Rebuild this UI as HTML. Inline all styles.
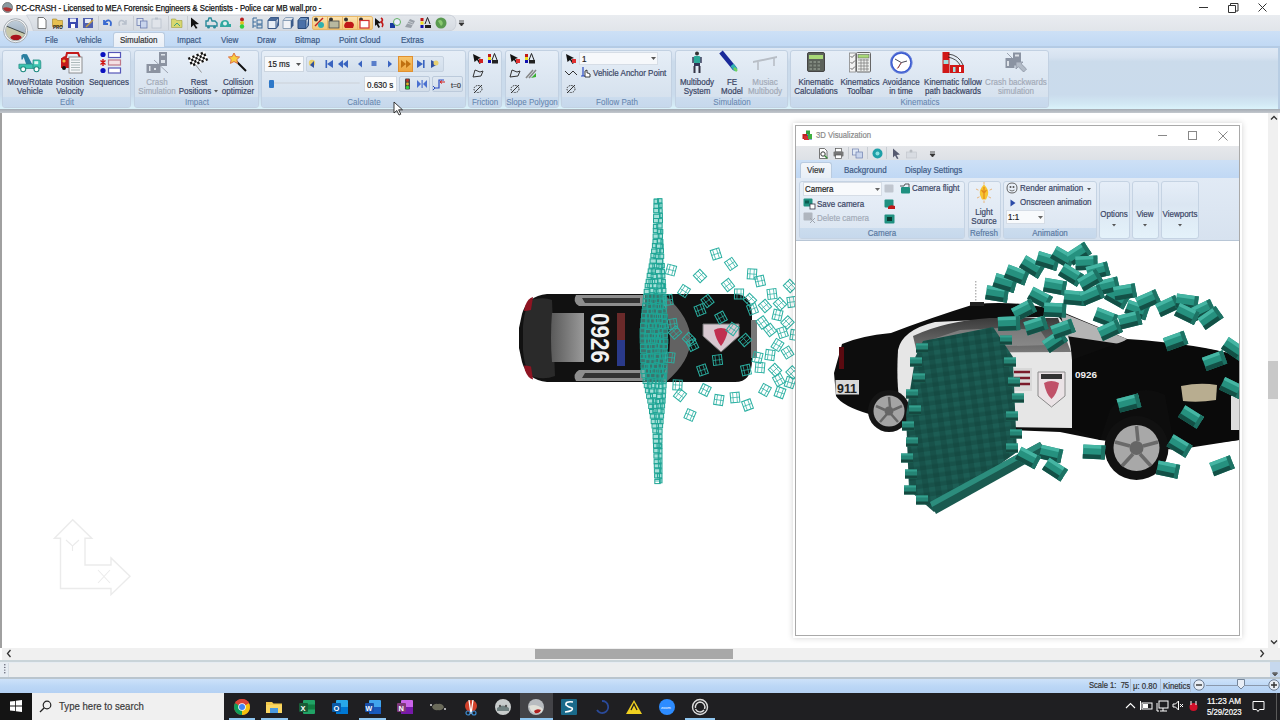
<!DOCTYPE html>
<html><head><meta charset="utf-8">
<style>
*{margin:0;padding:0;box-sizing:border-box}
html,body{width:1280px;height:720px;overflow:hidden;background:#fff;font-family:"Liberation Sans",sans-serif;position:relative}
.a{position:absolute}
.t{position:absolute;white-space:nowrap;-webkit-text-stroke-width:0.2px}
svg{overflow:visible}
</style></head><body>

<div class="a" style="left:0px;top:0px;width:1280px;height:15px;background:#fff"></div>
<svg class="a" style="left:1px;top:1px;" width="12" height="12" viewBox="0 0 12 12"><circle cx="6.5" cy="6.5" r="5" fill="#8a9aa0" stroke="#6a6a6a" stroke-width="0.8"/><path d="M2 7 Q6 5 11 8 L11 9 Q7 12 3 9Z" fill="#b03030"/></svg>
<div class="t" style="left:15.5px;top:4px;font-size:8.33px;line-height:8.33px;color:#111;transform:scaleX(0.9302);transform-origin:0 0;-webkit-text-stroke-width:0.25px">PC-CRASH - Licensed to MEA Forensic Engineers &amp; Scientists - Police car MB wall.pro -</div>
<div class="a" style="left:1199px;top:7px;width:9px;height:1px;background:#333"></div>
<svg class="a" style="left:1228px;top:2px;" width="11" height="11" viewBox="0 0 11 11"><path d="M0.5 3.5h7v7h-7z" fill="none" stroke="#333" stroke-width="1"/><path d="M2.5 3.5v-2h7.5v7.5h-2" fill="none" stroke="#333" stroke-width="1"/></svg>
<svg class="a" style="left:1258px;top:3px;" width="9" height="9" viewBox="0 0 9 9"><path d="M0.5 0.5L8.5 8.5M8.5 0.5L0.5 8.5" stroke="#333" stroke-width="1"/></svg>
<div class="a" style="left:0px;top:15px;width:1280px;height:16px;background:linear-gradient(#e9ecf0,#e1e5ea)"></div>
<svg class="a" style="left:0px;top:0px;" width="470" height="40" viewBox="0 0 470 40"><defs><linearGradient id="qg" x1="0" y1="0" x2="0" y2="1"><stop offset="0" stop-color="#e2e6eb"/><stop offset="1" stop-color="#d5dae1"/></linearGradient></defs><path d="M26.5 15 L448 15 Q456 15 456 23 Q456 31 448 31 L33.5 31 Q31 21 26.5 15Z" fill="url(#qg)" stroke="#c6ccd4" stroke-width="0.8"/></svg>
<div class="a" style="left:0px;top:31px;width:1280px;height:16px;background:linear-gradient(#cde0f6,#c0d8f4)"></div>
<div class="a" style="left:0px;top:46px;width:1280px;height:1px;background:#b5cbe4"></div>
<div class="a" style="left:113px;top:32px;width:52px;height:16px;background:linear-gradient(#f3f6fa,#e8eef6);border:1px solid #b9cbe0;border-bottom:none;border-radius:3px 3px 0 0"></div>
<div class="t" style="left:44.6px;top:36px;font-size:8.60px;line-height:8.60px;color:#3e5a85;transform:scaleX(0.9302);transform-origin:0 0;">File</div>
<div class="t" style="left:76.0px;top:36px;font-size:8.60px;line-height:8.60px;color:#3e5a85;transform:scaleX(0.9302);transform-origin:0 0;">Vehicle</div>
<div class="t" style="left:120.0px;top:36px;font-size:8.60px;line-height:8.60px;color:#333;transform:scaleX(0.9302);transform-origin:0 0;">Simulation</div>
<div class="t" style="left:177.4px;top:36px;font-size:8.60px;line-height:8.60px;color:#3e5a85;transform:scaleX(0.9302);transform-origin:0 0;">Impact</div>
<div class="t" style="left:221.0px;top:36px;font-size:8.60px;line-height:8.60px;color:#3e5a85;transform:scaleX(0.9302);transform-origin:0 0;">View</div>
<div class="t" style="left:257.0px;top:36px;font-size:8.60px;line-height:8.60px;color:#3e5a85;transform:scaleX(0.9302);transform-origin:0 0;">Draw</div>
<div class="t" style="left:294.7px;top:36px;font-size:8.60px;line-height:8.60px;color:#3e5a85;transform:scaleX(0.9302);transform-origin:0 0;">Bitmap</div>
<div class="t" style="left:339.3px;top:36px;font-size:8.60px;line-height:8.60px;color:#3e5a85;transform:scaleX(0.9302);transform-origin:0 0;">Point Cloud</div>
<div class="t" style="left:400.7px;top:36px;font-size:8.60px;line-height:8.60px;color:#3e5a85;transform:scaleX(0.9302);transform-origin:0 0;">Extras</div>
<svg class="a" style="left:3px;top:18px;" width="26" height="26" viewBox="0 0 26 26"><defs><clipPath id="oc"><circle cx="12.6" cy="12.7" r="9.6"/></clipPath><linearGradient id="sky" x1="0" y1="0" x2="0" y2="1"><stop offset="0" stop-color="#c4d2de"/><stop offset="1" stop-color="#8a9cae"/></linearGradient></defs><circle cx="12.6" cy="12.7" r="12" fill="#f2f4f6" stroke="#9aa1a8" stroke-width="0.9"/><circle cx="12.6" cy="12.7" r="10" fill="none" stroke="#8a9096" stroke-width="0.8"/><g clip-path="url(#oc)"><rect x="0" y="0" width="26" height="26" fill="url(#sky)"/><path d="M0 7 L26 17 L26 26 L0 26Z" fill="#c9c9aa"/><path d="M2 7.5 L24 16.5" stroke="#3e4646" stroke-width="1"/><ellipse cx="13" cy="19.5" rx="5.5" ry="2.8" fill="#a8141c"/><path d="M5 20 Q9 23 12 23" stroke="#e8d8d0" stroke-width="1" fill="none"/></g></svg>
<svg class="a" style="left:35.7px;top:17.0px;" width="12" height="12" viewBox="0 0 12 12"><path d="M2 0.5h5.5l2.5 2.5v8.5h-8z" fill="#fff" stroke="#555" stroke-width="0.8"/></svg>
<svg class="a" style="left:51.5px;top:17.0px;" width="12" height="12" viewBox="0 0 12 12"><path d="M0.5 2h4l1 1.5h5v6h-10z" fill="#e8c050" stroke="#a08020" stroke-width="0.6"/><text x="1" y="11.5" font-size="4.5" font-weight="bold" fill="#111" font-family="Liberation Sans">PRO</text></svg>
<svg class="a" style="left:66.6px;top:17.0px;" width="12" height="12" viewBox="0 0 12 12"><rect x="1" y="1" width="10" height="10" fill="#3a4ab0"/><rect x="3" y="1.5" width="6" height="3.5" fill="#e8ecf8"/><rect x="4" y="7" width="4" height="4" fill="#fff"/></svg>
<svg class="a" style="left:82.0px;top:17.0px;" width="12" height="12" viewBox="0 0 12 12"><rect x="1" y="1" width="10" height="10" fill="#5060b0"/><rect x="3" y="2" width="6" height="4" fill="#e8ecf8"/><path d="M4 10l7-7" stroke="#c8a040" stroke-width="1.5"/></svg>
<div class="a" style="left:97.5px;top:16px;width:1px;height:14px;background:#c7ccd3"></div>
<svg class="a" style="left:101.3px;top:17.0px;" width="12" height="12" viewBox="0 0 12 12"><path d="M3 3v4h4M3.5 7 Q5 3 8 3.5 Q11 4.5 9.5 9" fill="none" stroke="#3a6ad0" stroke-width="1.8"/></svg>
<svg class="a" style="left:116.8px;top:17.0px;" width="12" height="12" viewBox="0 0 12 12"><path d="M9 3v4h-4M8.5 7 Q7 3 4 3.5 Q1 4.5 2.5 9" fill="none" stroke="#b8c0cc" stroke-width="1.5"/></svg>
<div class="a" style="left:133px;top:16px;width:1px;height:14px;background:#c7ccd3"></div>
<svg class="a" style="left:135.7px;top:17.0px;" width="12" height="12" viewBox="0 0 12 12"><rect x="1" y="1.5" width="6" height="7" fill="#dfe6f0" stroke="#6a7ab0" stroke-width="0.8"/><rect x="4.5" y="4" width="6.5" height="7" fill="#c8d4ec" stroke="#6a7ab0" stroke-width="0.8"/></svg>
<svg class="a" style="left:151.1px;top:17.0px;" width="12" height="12" viewBox="0 0 12 12"><rect x="1" y="2" width="9" height="9" fill="#e0e4ea" stroke="#b8c0cc" stroke-width="0.8"/><rect x="4" y="0.5" width="3" height="2" fill="#b8c0cc"/></svg>
<div class="a" style="left:167.5px;top:16px;width:1px;height:14px;background:#c7ccd3"></div>
<svg class="a" style="left:170.9px;top:17.0px;" width="12" height="12" viewBox="0 0 12 12"><path d="M0.5 2h4l1 1.5h5.5v7h-10.5z" fill="#d8d870" stroke="#a0a040" stroke-width="0.6"/><path d="M3 9l3-3 3 3" stroke="#40a080" fill="none"/></svg>
<div class="a" style="left:187.2px;top:16px;width:1px;height:14px;background:#c7ccd3"></div>
<svg class="a" style="left:189.0px;top:17.0px;" width="12" height="12" viewBox="0 0 12 12"><path d="M2 0.5 L10 7 L6 7.5 L8.5 11 L6.8 11.8 L4.5 8 L2 10.5Z" fill="#111"/></svg>
<svg class="a" style="left:204.8px;top:17.0px;" width="13" height="12" viewBox="0 0 13 12"><path d="M1 9h11v-3l-2-2h-3l-1-3h-2l-1 3h-2z" fill="none" stroke="#2a8a9a" stroke-width="1.4"/><circle cx="3.5" cy="10" r="1.5" fill="#2a8a9a"/><circle cx="9.5" cy="10" r="1.5" fill="#2a8a9a"/></svg>
<svg class="a" style="left:219.4px;top:17.0px;" width="13" height="12" viewBox="0 0 13 12"><path d="M1 10 Q1 3 6 3 Q10 3 10 7 h2 v3z" fill="#30a8a0"/><circle cx="6" cy="6.5" r="2" fill="#e0f0f0"/></svg>
<svg class="a" style="left:235.7px;top:17.0px;" width="12" height="12" viewBox="0 0 12 12"><circle cx="6" cy="2.5" r="2" fill="#b82020"/><circle cx="6" cy="6" r="2" fill="#e0c020"/><circle cx="6" cy="9.5" r="2.2" fill="#30d040"/></svg>
<svg class="a" style="left:251.3px;top:17.0px;" width="12" height="12" viewBox="0 0 12 12"><path d="M2 1h4M2 1v10M2 5h3M2 9h3" stroke="#3a6a9a" stroke-width="1" fill="none"/><rect x="6" y="3" width="5" height="4" fill="none" stroke="#3a6a9a"/><rect x="6" y="8" width="5" height="3" fill="none" stroke="#3a6a9a"/></svg>
<svg class="a" style="left:266.6px;top:17.0px;" width="12" height="12" viewBox="0 0 12 12"><path d="M1 3.5h8v8h-8z" fill="#e8eef6" stroke="#3a5a8a"/><path d="M1 3.5l2.5-3h8l-2.5 3M9 11.5l2.5-3v-8" fill="#4a6a9a" stroke="#3a5a8a"/></svg>
<svg class="a" style="left:281.7px;top:17.0px;" width="12" height="12" viewBox="0 0 12 12"><path d="M1 3.5h8v8h-8z" fill="#f0f2f6" stroke="#8aa0b8"/><path d="M9 11.5l2.5-3v-8l-2.5 3z" fill="#3a5a8a"/><path d="M1 3.5l2.5-3h8" fill="none" stroke="#8aa0b8"/></svg>
<svg class="a" style="left:297.0px;top:17.0px;" width="12" height="12" viewBox="0 0 12 12"><path d="M1 3.5h8v8h-8z" fill="#4a70a8" stroke="#2a4a7a"/><path d="M1 3.5l2.5-3h8l-2.5 3M9 11.5l2.5-3v-8" fill="#6a90c0" stroke="#2a4a7a"/></svg>
<div class="a" style="left:311.5px;top:16px;width:61px;height:14px;background:linear-gradient(#fbe3b0,#f4c878);border:1px solid #e8b868;border-radius:2px"></div>
<div class="a" style="left:326.6px;top:16px;width:1px;height:14px;background:#e8b868"></div>
<div class="a" style="left:341.7px;top:16px;width:1px;height:14px;background:#e8b868"></div>
<div class="a" style="left:356.8px;top:16px;width:1px;height:14px;background:#e8b868"></div>
<svg class="a" style="left:312.7px;top:17.0px;" width="12" height="12" viewBox="0 0 12 12"><circle cx="3" cy="2.5" r="2" fill="#333"/><path d="M2 9l8-8" stroke="#c02020" stroke-width="1.5"/><circle cx="8" cy="8" r="3" fill="#30b0b0"/></svg>
<svg class="a" style="left:327.8px;top:17.0px;" width="12" height="12" viewBox="0 0 12 12"><circle cx="3" cy="2.5" r="2" fill="#333"/><rect x="1" y="4" width="10" height="7" fill="#b8b8a0" stroke="#444" stroke-width="0.8"/></svg>
<svg class="a" style="left:342.9px;top:17.0px;" width="12" height="12" viewBox="0 0 12 12"><circle cx="3" cy="2.5" r="2" fill="#333"/><path d="M1 9 Q2 4 6 5 Q10 4 11 8 L10 11 H2Z" fill="#c01818"/></svg>
<svg class="a" style="left:358.0px;top:17.0px;" width="12" height="12" viewBox="0 0 12 12"><circle cx="3" cy="2.5" r="2" fill="#333"/><rect x="2" y="3.5" width="9" height="7.5" fill="#fff" stroke="#d03030" stroke-width="1.2"/></svg>
<svg class="a" style="left:374.3px;top:17.0px;" width="12" height="12" viewBox="0 0 12 12"><path d="M1 1 L7 6 L4 6.5 L6 10 L4.5 11 L2.5 7.5 L1 9Z" fill="#111"/><path d="M7 1 Q10 3 7 5 Q10 7 8 10" stroke="#c01818" stroke-width="1.6" fill="none"/></svg>
<svg class="a" style="left:389.3px;top:17.0px;" width="12" height="12" viewBox="0 0 12 12"><path d="M1 6h5v5h-5z" fill="#1a3aa0"/><circle cx="8" cy="5" r="3.5" fill="#eef" stroke="#60b060" stroke-width="1"/></svg>
<svg class="a" style="left:404.2px;top:17.0px;" width="12" height="12" viewBox="0 0 12 12"><path d="M1 10 L6 2 L11 4 L7 11Z" fill="#9aa0a8"/><path d="M3 6l6 2M4 4l5 2" stroke="#d0d4da" stroke-width="0.8"/></svg>
<svg class="a" style="left:420.0px;top:17.0px;" width="12" height="12" viewBox="0 0 12 12"><rect x="0.5" y="1" width="3" height="3" fill="#c01818"/><rect x="0.5" y="4.5" width="3" height="3" fill="#f0e020"/><rect x="0.5" y="8" width="3" height="3" fill="#1010b0"/><path d="M5 7 L7.5 0.5 L10 7" fill="none" stroke="#222"/><rect x="5" y="8" width="6" height="3" fill="#222"/></svg>
<svg class="a" style="left:435.0px;top:17.0px;" width="12" height="12" viewBox="0 0 12 12"><circle cx="6" cy="6" r="5.5" fill="#5a9a50"/><path d="M3 4 Q5 2 7 4 Q9 7 6 9" fill="#8ac870"/></svg>
<svg class="a" style="left:456.0px;top:17.0px;" width="11" height="12" viewBox="0 0 11 12"><path d="M3 4h5M3 6l2.5 3 2.5-3z" stroke="#333" fill="#333" stroke-width="0.8"/></svg>
<div class="a" style="left:0px;top:47px;width:1280px;height:63px;background:linear-gradient(#dfe9f5 0%,#d6e2f0 15%,#cbdbeb 22%,#cadbec 75%,#d2e8f4 90%,#dcf5fc 100%);border-top:1px solid #b3cbe6;border-right:2px solid #b8cde3"></div>
<div class="a" style="left:0px;top:109px;width:1280px;height:4px;background:linear-gradient(#a4abb3,#c3c8ce)"></div>
<div class="a" style="left:2px;top:50px;width:129px;height:58px;border:1px solid #c2d1e2;border-radius:3px;background:linear-gradient(#e6eef7,#dde7f2 45%,#d3dfec)"></div>
<div class="a" style="left:3px;top:97px;width:127px;height:10px;background:linear-gradient(#cbdcee,#c6d8ec);border-radius:0 0 2px 2px"></div>
<div class="t" style="left:-33.5px;width:200px;text-align:center;top:98px;font-size:8.60px;line-height:8.60px;color:#6585ae;transform:scaleX(0.9302);transform-origin:50% 0;-webkit-text-stroke-width:0.05px">Edit</div>
<div class="a" style="left:134px;top:50px;width:125px;height:58px;border:1px solid #c2d1e2;border-radius:3px;background:linear-gradient(#e6eef7,#dde7f2 45%,#d3dfec)"></div>
<div class="a" style="left:135px;top:97px;width:123px;height:10px;background:linear-gradient(#cbdcee,#c6d8ec);border-radius:0 0 2px 2px"></div>
<div class="t" style="left:96.5px;width:200px;text-align:center;top:98px;font-size:8.60px;line-height:8.60px;color:#6585ae;transform:scaleX(0.9302);transform-origin:50% 0;-webkit-text-stroke-width:0.05px">Impact</div>
<div class="a" style="left:261px;top:50px;width:205px;height:58px;border:1px solid #c2d1e2;border-radius:3px;background:linear-gradient(#e6eef7,#dde7f2 45%,#d3dfec)"></div>
<div class="a" style="left:262px;top:97px;width:203px;height:10px;background:linear-gradient(#cbdcee,#c6d8ec);border-radius:0 0 2px 2px"></div>
<div class="t" style="left:263.5px;width:200px;text-align:center;top:98px;font-size:8.60px;line-height:8.60px;color:#6585ae;transform:scaleX(0.9302);transform-origin:50% 0;-webkit-text-stroke-width:0.05px">Calculate</div>
<div class="a" style="left:468px;top:50px;width:34px;height:58px;border:1px solid #c2d1e2;border-radius:3px;background:linear-gradient(#e6eef7,#dde7f2 45%,#d3dfec)"></div>
<div class="a" style="left:469px;top:97px;width:32px;height:10px;background:linear-gradient(#cbdcee,#c6d8ec);border-radius:0 0 2px 2px"></div>
<div class="t" style="left:385.0px;width:200px;text-align:center;top:98px;font-size:8.60px;line-height:8.60px;color:#6585ae;transform:scaleX(0.9302);transform-origin:50% 0;-webkit-text-stroke-width:0.05px">Friction</div>
<div class="a" style="left:505px;top:50px;width:54px;height:58px;border:1px solid #c2d1e2;border-radius:3px;background:linear-gradient(#e6eef7,#dde7f2 45%,#d3dfec)"></div>
<div class="a" style="left:506px;top:97px;width:52px;height:10px;background:linear-gradient(#cbdcee,#c6d8ec);border-radius:0 0 2px 2px"></div>
<div class="t" style="left:432.0px;width:200px;text-align:center;top:98px;font-size:8.60px;line-height:8.60px;color:#6585ae;transform:scaleX(0.9302);transform-origin:50% 0;-webkit-text-stroke-width:0.05px">Slope Polygon</div>
<div class="a" style="left:561px;top:50px;width:111px;height:58px;border:1px solid #c2d1e2;border-radius:3px;background:linear-gradient(#e6eef7,#dde7f2 45%,#d3dfec)"></div>
<div class="a" style="left:562px;top:97px;width:109px;height:10px;background:linear-gradient(#cbdcee,#c6d8ec);border-radius:0 0 2px 2px"></div>
<div class="t" style="left:516.5px;width:200px;text-align:center;top:98px;font-size:8.60px;line-height:8.60px;color:#6585ae;transform:scaleX(0.9302);transform-origin:50% 0;-webkit-text-stroke-width:0.05px">Follow Path</div>
<div class="a" style="left:675px;top:50px;width:113px;height:58px;border:1px solid #c2d1e2;border-radius:3px;background:linear-gradient(#e6eef7,#dde7f2 45%,#d3dfec)"></div>
<div class="a" style="left:676px;top:97px;width:111px;height:10px;background:linear-gradient(#cbdcee,#c6d8ec);border-radius:0 0 2px 2px"></div>
<div class="t" style="left:631.5px;width:200px;text-align:center;top:98px;font-size:8.60px;line-height:8.60px;color:#6585ae;transform:scaleX(0.9302);transform-origin:50% 0;-webkit-text-stroke-width:0.05px">Simulation</div>
<div class="a" style="left:790px;top:50px;width:259px;height:58px;border:1px solid #c2d1e2;border-radius:3px;background:linear-gradient(#e6eef7,#dde7f2 45%,#d3dfec)"></div>
<div class="a" style="left:791px;top:97px;width:257px;height:10px;background:linear-gradient(#cbdcee,#c6d8ec);border-radius:0 0 2px 2px"></div>
<div class="t" style="left:819.5px;width:200px;text-align:center;top:98px;font-size:8.60px;line-height:8.60px;color:#6585ae;transform:scaleX(0.9302);transform-origin:50% 0;-webkit-text-stroke-width:0.05px">Kinematics</div>
<div class="t" style="left:-70.0px;width:200px;text-align:center;top:78px;font-size:8.60px;line-height:8.60px;color:#3a4565;transform:scaleX(0.9302);transform-origin:50% 0;">Move/Rotate</div>
<div class="t" style="left:-70.0px;width:200px;text-align:center;top:87px;font-size:8.60px;line-height:8.60px;color:#3a4565;transform:scaleX(0.9302);transform-origin:50% 0;">Vehicle</div>
<div class="t" style="left:-30.0px;width:200px;text-align:center;top:78px;font-size:8.60px;line-height:8.60px;color:#3a4565;transform:scaleX(0.9302);transform-origin:50% 0;">Position</div>
<div class="t" style="left:-30.0px;width:200px;text-align:center;top:87px;font-size:8.60px;line-height:8.60px;color:#3a4565;transform:scaleX(0.9302);transform-origin:50% 0;">Velocity</div>
<div class="t" style="left:8.5px;width:200px;text-align:center;top:78px;font-size:8.60px;line-height:8.60px;color:#3a4565;transform:scaleX(0.9302);transform-origin:50% 0;">Sequences</div>
<svg class="a" style="left:18px;top:52px;" width="24" height="21" viewBox="0 0 24 21"><path d="M3.4 3.2 L5.2 1.9 L9 2.3 L14.2 12.2 L8.2 12.2 L5.6 4.9 L4.7 7.5 L3.4 7.5Z" fill="#2a7fa0"/><path d="M0.9 12.2 H16.3 V16.5 H0.9Z" fill="#3cc4b0" stroke="#1f8a80" stroke-width="0.7"/><path d="M15 7.9 H21 Q22.8 7.9 22.8 10 V16.5 H15Z" fill="#3cc4b0" stroke="#1f8a80" stroke-width="0.7"/><rect x="16.3" y="9.2" width="3.9" height="3" fill="#dff7f2"/><circle cx="5.2" cy="17.3" r="2.5" fill="#fff" stroke="#1f8a80" stroke-width="1.1"/><circle cx="18.5" cy="17.3" r="2.5" fill="#fff" stroke="#1f8a80" stroke-width="1.1"/></svg>
<svg class="a" style="left:60px;top:52px;" width="23" height="22" viewBox="0 0 23 22"><path d="M2 15 L2 8 Q3 5 6 5 L7 1 L18 1 L20 6 L20 9 L10 9 L10 15Z" fill="none" stroke="#c41a1a" stroke-width="2"/><rect x="1" y="6" width="8" height="9" fill="#c41a1a"/><circle cx="4" cy="9" r="1.6" fill="#f5b840"/><circle cx="4" cy="16" r="2" fill="#111"/><rect x="9" y="5" width="13" height="16" fill="#f4f6f8" stroke="#777" stroke-width="0.8"/><path d="M11 8h9M11 10.5h9M11 13h9M11 15.5h9M11 18h9" stroke="#9aa" stroke-width="0.8"/></svg>
<svg class="a" style="left:99px;top:51px;" width="23" height="24" viewBox="0 0 23 24"><circle cx="4" cy="3.5" r="2.6" fill="#0a10c0"/><circle cx="4" cy="19.5" r="2.6" fill="#0a10c0"/><path d="M4 8v7M1.5 9.5l5 4M6.5 9.5l-5 4" stroke="#d01010" stroke-width="1.4"/><rect x="9.5" y="1.5" width="12" height="5" fill="#fff" stroke="#5656b8" stroke-width="1.2"/><rect x="9.5" y="9" width="12" height="5" fill="#f4e0e4" stroke="#c07888" stroke-width="1.2"/><rect x="9.5" y="17" width="12" height="5" fill="#fff" stroke="#5656b8" stroke-width="1.2"/></svg>
<div class="t" style="left:57.4px;width:200px;text-align:center;top:78px;font-size:8.60px;line-height:8.60px;color:#a3abb8;transform:scaleX(0.9302);transform-origin:50% 0;">Crash</div>
<div class="t" style="left:57.4px;width:200px;text-align:center;top:87px;font-size:8.60px;line-height:8.60px;color:#a3abb8;transform:scaleX(0.9302);transform-origin:50% 0;">Simulation</div>
<div class="t" style="left:98.9px;width:200px;text-align:center;top:78px;font-size:8.60px;line-height:8.60px;color:#3a4565;transform:scaleX(0.9302);transform-origin:50% 0;">Rest</div>
<div class="t" style="left:95.4px;width:200px;text-align:center;top:87px;font-size:8.60px;line-height:8.60px;color:#3a4565;transform:scaleX(0.9302);transform-origin:50% 0;">Positions</div>
<svg class="a" style="left:214px;top:90px;" width="4" height="2.5" viewBox="0 0 4 2.5"><path d="M0 0h4L2 2.5Z" fill="#555"/></svg>
<div class="t" style="left:138.0px;width:200px;text-align:center;top:78px;font-size:8.60px;line-height:8.60px;color:#3a4565;transform:scaleX(0.9302);transform-origin:50% 0;">Collision</div>
<div class="t" style="left:138.0px;width:200px;text-align:center;top:87px;font-size:8.60px;line-height:8.60px;color:#3a4565;transform:scaleX(0.9302);transform-origin:50% 0;">optimizer</div>
<svg class="a" style="left:146px;top:52px;" width="23" height="22" viewBox="0 0 23 22"><rect x="0.5" y="12" width="14" height="9" fill="#8b93a1"/><rect x="13" y="0" width="8" height="14" fill="#8b93a1"/><rect x="3" y="14" width="1.5" height="5" fill="#dde3ea"/><rect x="8" y="16" width="2" height="2" fill="#dde3ea"/><rect x="15" y="2" width="4" height="1.5" fill="#dde3ea"/><rect x="15" y="8" width="4" height="3" fill="#dde3ea"/><path d="M8 8 L22 21" stroke="#8b93a1" stroke-width="0.8"/></svg>
<svg class="a" style="left:188px;top:51px;" width="22" height="23" viewBox="0 0 22 23"><path d="M7 13 L13.5 21.5" stroke="#8a8a8a" stroke-width="0.9"/><g transform="rotate(-22 10 8)"><rect x="1" y="3" width="18" height="10" fill="#fff"/><g fill="#111"><rect x="1" y="3" width="2.25" height="2.5"/><rect x="5.5" y="3" width="2.25" height="2.5"/><rect x="10" y="3" width="2.25" height="2.5"/><rect x="14.5" y="3" width="2.25" height="2.5"/><rect x="3.25" y="5.5" width="2.25" height="2.5"/><rect x="7.75" y="5.5" width="2.25" height="2.5"/><rect x="12.25" y="5.5" width="2.25" height="2.5"/><rect x="16.75" y="5.5" width="2.25" height="2.5"/><rect x="1" y="8" width="2.25" height="2.5"/><rect x="5.5" y="8" width="2.25" height="2.5"/><rect x="10" y="8" width="2.25" height="2.5"/><rect x="14.5" y="8" width="2.25" height="2.5"/><rect x="3.25" y="10.5" width="2.25" height="2.5"/><rect x="7.75" y="10.5" width="2.25" height="2.5"/><rect x="12.25" y="10.5" width="2.25" height="2.5"/><rect x="16.75" y="10.5" width="2.25" height="2.5"/></g></g></svg>
<svg class="a" style="left:227px;top:52px;" width="22" height="22" viewBox="0 0 22 22"><path d="M9 9 L19 19" stroke="#111" stroke-width="2"/><path d="M7 1 L8.8 4.6 L12.6 5 L9.8 7.6 L10.6 11.4 L7 9.5 L3.4 11.4 L4.2 7.6 L1.4 5 L5.2 4.6Z" fill="#f6d040" stroke="#e07040" stroke-width="1"/></svg>
<div class="a" style="left:264px;top:56px;width:40px;height:16px;background:#f7f9fb;border:1px solid #cdd6e0"></div>
<div class="t" style="left:267.5px;top:60px;font-size:8.60px;line-height:8.60px;color:#222;transform:scaleX(0.9302);transform-origin:0 0;">15 ms</div>
<svg class="a" style="left:296px;top:63px;" width="5" height="3" viewBox="0 0 5 3"><path d="M0 0h5L2.5 3Z" fill="#555"/></svg>
<div class="a" style="left:306px;top:56px;width:138px;height:16px;background:linear-gradient(#dde7f2,#d2deeb);border:1px solid #c6d2e0;border-radius:2px"></div>
<div class="a" style="left:398px;top:56px;width:15px;height:16px;background:linear-gradient(#f7c46a,#eea640);border:1px solid #e09030"></div>
<svg class="a" style="left:306px;top:56px;" width="138" height="16" viewBox="0 0 138 16"><circle cx="6" cy="7" r="3.2" fill="#e8d070"/><path d="M4 9 L8 5 L8 12Z" fill="#3050a0"/><rect x="19.5" y="4" width="1.6" height="8" fill="#3a64c0"/><path d="M27 4v8l-6-4Z" fill="#3a64c0"/><path d="M37 4v8l-5-4ZM42 4v8l-5-4Z" fill="#3a64c0"/><path d="M56 4.5v7l-4-3.5Z" fill="#3a64c0"/><rect x="65.5" y="5" width="5" height="5" fill="#3a64c0" opacity=".8"/><path d="M82 4.5v7l4-3.5Z" fill="#3a64c0"/><path d="M95 4v8l5-4ZM100 4v8l5-4Z" fill="#c07010"/><path d="M111 4v8l6-4Z" fill="#3a64c0"/><rect x="117" y="4" width="1.6" height="8" fill="#3a64c0"/><path d="M125 4v8l7-4Z" fill="#3050a0"/><circle cx="130" cy="7" r="2.5" fill="#e8d070"/></svg>
<div class="a" style="left:268px;top:82px;width:92px;height:2px;background:#d3dbe4;border-radius:1px"></div>
<div class="a" style="left:269px;top:80px;width:5px;height:8px;background:#2e78c8;border-radius:1px"></div>
<div class="a" style="left:364px;top:76px;width:33px;height:16px;background:#fbfcfd;border:1px solid #d0d8e2"></div>
<div class="t" style="left:366.5px;top:81px;font-size:8.60px;line-height:8.60px;color:#222;transform:scaleX(0.9302);transform-origin:0 0;">0.630 s</div>
<div class="a" style="left:399px;top:76px;width:31px;height:16px;background:linear-gradient(#dfe8f2,#d2dde9);border:1px solid #bccadb;border-radius:2px"></div>
<svg class="a" style="left:403px;top:77px;" width="26" height="14" viewBox="0 0 26 14"><rect x="2" y="1.5" width="5" height="11" rx="1" fill="#444"/><circle cx="4.5" cy="3.5" r="1.4" fill="#c03020"/><circle cx="4.5" cy="7" r="1.4" fill="#e0b020"/><circle cx="4.5" cy="10.5" r="1.8" fill="#30d040"/><path d="M14 3v8l4-4ZM24 3v8l-4-4Z" fill="#4a70d0"/><rect x="18.5" y="3" width="1.2" height="8" fill="#4a70d0"/></svg>
<div class="a" style="left:432px;top:76px;width:31px;height:16px;background:linear-gradient(#dfe8f2,#d2dde9);border:1px solid #bccadb;border-radius:2px"></div>
<svg class="a" style="left:433px;top:77px;" width="14" height="14" viewBox="0 0 14 14"><path d="M1 11h5V3h5" fill="none" stroke="#2a4ac0" stroke-width="1.2"/><path d="M7 5h5M9 3.5l-2 1.5 2 1.5" stroke="#d02020" stroke-width="1" fill="none"/><path d="M0 9l2 2-2 2" stroke="#2a4ac0" fill="none" stroke-width="1"/></svg>
<div class="t" style="left:450.5px;top:82px;font-size:7.52px;line-height:7.52px;color:#333;transform:scaleX(0.9302);transform-origin:0 0;">t=0</div>
<svg class="a" style="left:472px;top:53px;" width="12" height="11" viewBox="0 0 12 11"><path d="M1 1 L9 5 L6 6 L9 10 L7.5 11 L5 7 L2.5 9Z" fill="#111"/><rect x="7" y="6" width="4" height="4" fill="#d02020"/></svg>
<svg class="a" style="left:488px;top:53px;" width="11" height="11" viewBox="0 0 11 11"><rect x="0" y="1" width="3" height="3" fill="#c01818"/><rect x="0" y="4" width="3" height="3" fill="#f0e020"/><rect x="0" y="7" width="3" height="3" fill="#1010b0"/><path d="M4 7 L6.5 0.5 L9 7" fill="none" stroke="#222" stroke-width="1"/><rect x="4" y="7" width="6" height="3.5" fill="#222"/></svg>
<svg class="a" style="left:472px;top:69px;" width="12" height="9" viewBox="0 0 12 9"><path d="M1 8 L3 1 L8 3 L11 2 L9 7Z" fill="none" stroke="#333" stroke-width="1"/></svg>
<svg class="a" style="left:472px;top:83px;" width="12" height="11" viewBox="0 0 12 11"><ellipse cx="6" cy="6" rx="4" ry="3.5" fill="none" stroke="#333" stroke-width="1" stroke-dasharray="1.5 1"/><path d="M2 10 L10 2" stroke="#333" stroke-width="1"/></svg>
<svg class="a" style="left:509px;top:53px;" width="12" height="11" viewBox="0 0 12 11"><path d="M1 1 L9 5 L6 6 L9 10 L7.5 11 L5 7 L2.5 9Z" fill="#111"/><rect x="7" y="6" width="4" height="4" fill="#e03030"/></svg>
<svg class="a" style="left:525px;top:53px;" width="11" height="11" viewBox="0 0 11 11"><rect x="0" y="1" width="3" height="3" fill="#c01818"/><rect x="0" y="4" width="3" height="3" fill="#f0e020"/><rect x="0" y="7" width="3" height="3" fill="#1010b0"/><path d="M4 7 L6.5 0.5 L9 7" fill="none" stroke="#222" stroke-width="1"/><rect x="4" y="7" width="6" height="3.5" fill="#222"/></svg>
<svg class="a" style="left:509px;top:69px;" width="12" height="9" viewBox="0 0 12 9"><path d="M1 8 L3 1 L8 3 L11 2 L9 7Z" fill="none" stroke="#333" stroke-width="1"/></svg>
<svg class="a" style="left:525px;top:68px;" width="12" height="11" viewBox="0 0 12 11"><path d="M1 10 L8 2 M4 10 L11 2" stroke="#888" stroke-width="1.6"/><path d="M6 10 L11 5 L11 9Z" fill="#3ab030"/></svg>
<svg class="a" style="left:509px;top:83px;" width="12" height="11" viewBox="0 0 12 11"><ellipse cx="6" cy="6" rx="4" ry="3.5" fill="none" stroke="#333" stroke-width="1" stroke-dasharray="1.5 1"/><path d="M2 10 L10 2" stroke="#333" stroke-width="1"/></svg>
<svg class="a" style="left:565px;top:53px;" width="12" height="11" viewBox="0 0 12 11"><path d="M1 1 L9 5 L6 6 L9 10 L7.5 11 L5 7 L2.5 9Z" fill="#111"/><rect x="7" y="6" width="4" height="4" fill="#e03030"/></svg>
<div class="a" style="left:579px;top:52px;width:79px;height:13px;background:#f6f8fb;border:1px solid #d6dde6"></div>
<div class="t" style="left:581.5px;top:55px;font-size:8.60px;line-height:8.60px;color:#222;transform:scaleX(0.9302);transform-origin:0 0;">1</div>
<svg class="a" style="left:651px;top:57px;" width="5" height="3" viewBox="0 0 5 3"><path d="M0 0h5L2.5 3Z" fill="#555"/></svg>
<svg class="a" style="left:565px;top:69px;" width="12" height="8" viewBox="0 0 12 8"><path d="M0 2 L4 6 L8 2 L12 6" fill="none" stroke="#333" stroke-width="1"/></svg>
<svg class="a" style="left:580px;top:66px;" width="12" height="12" viewBox="0 0 12 12"><path d="M3 1v9M1 10h4" stroke="#2a4ac0" stroke-width="1.2"/><path d="M5 5v6h5v-3l-2-1-1 0v-3Z" fill="#fff" stroke="#111" stroke-width="0.8"/></svg>
<div class="t" style="left:593.0px;top:69px;font-size:8.60px;line-height:8.60px;color:#3a4565;transform:scaleX(0.9302);transform-origin:0 0;">Vehicle Anchor Point</div>
<svg class="a" style="left:565px;top:83px;" width="12" height="11" viewBox="0 0 12 11"><ellipse cx="6" cy="6" rx="4" ry="3.5" fill="none" stroke="#333" stroke-width="1" stroke-dasharray="1.5 1"/><path d="M2 10 L10 2" stroke="#333" stroke-width="1"/></svg>
<div class="t" style="left:597.0px;width:200px;text-align:center;top:78px;font-size:8.60px;line-height:8.60px;color:#3a4565;transform:scaleX(0.9302);transform-origin:50% 0;">Multibody</div>
<div class="t" style="left:597.0px;width:200px;text-align:center;top:87px;font-size:8.60px;line-height:8.60px;color:#3a4565;transform:scaleX(0.9302);transform-origin:50% 0;">System</div>
<div class="t" style="left:631.5px;width:200px;text-align:center;top:78px;font-size:8.60px;line-height:8.60px;color:#3a4565;transform:scaleX(0.9302);transform-origin:50% 0;">FE</div>
<div class="t" style="left:631.5px;width:200px;text-align:center;top:87px;font-size:8.60px;line-height:8.60px;color:#3a4565;transform:scaleX(0.9302);transform-origin:50% 0;">Model</div>
<div class="t" style="left:665.0px;width:200px;text-align:center;top:78px;font-size:8.60px;line-height:8.60px;color:#a3abb8;transform:scaleX(0.9302);transform-origin:50% 0;">Musiac</div>
<div class="t" style="left:665.0px;width:200px;text-align:center;top:87px;font-size:8.60px;line-height:8.60px;color:#a3abb8;transform:scaleX(0.9302);transform-origin:50% 0;">Multibody</div>
<svg class="a" style="left:690px;top:51px;" width="14" height="23" viewBox="0 0 14 23"><circle cx="7" cy="2.5" r="2" fill="#333"/><rect x="3.5" y="5" width="7" height="7" rx="1.5" fill="#2aa898"/><rect x="4" y="12" width="6" height="3" fill="#335"/><path d="M4.5 15v7M9.5 15v7" stroke="#334" stroke-width="2"/><path d="M3 6v6M11 6v6" stroke="#335" stroke-width="1.4"/></svg>
<svg class="a" style="left:719px;top:51px;" width="20" height="22" viewBox="0 0 20 22"><path d="M2 1 L16 18" stroke="#1a2a9a" stroke-width="4.5"/><path d="M13 14 L17 19" stroke="#30b0b0" stroke-width="4"/><path d="M15 17 L18 20" stroke="#70d060" stroke-width="2.5"/></svg>
<svg class="a" style="left:752px;top:54px;" width="26" height="17" viewBox="0 0 26 17"><path d="M1 7 L25 2 L25 4 L1 9Z" fill="#b8bec6"/><path d="M6 8v8M22 4v8" stroke="#b8bec6" stroke-width="1.6"/></svg>
<div class="t" style="left:715.5px;width:200px;text-align:center;top:78px;font-size:8.60px;line-height:8.60px;color:#3a4565;transform:scaleX(0.9302);transform-origin:50% 0;">Kinematic</div>
<div class="t" style="left:715.5px;width:200px;text-align:center;top:87px;font-size:8.60px;line-height:8.60px;color:#3a4565;transform:scaleX(0.9302);transform-origin:50% 0;">Calculations</div>
<div class="t" style="left:760.0px;width:200px;text-align:center;top:78px;font-size:8.60px;line-height:8.60px;color:#3a4565;transform:scaleX(0.9302);transform-origin:50% 0;">Kinematics</div>
<div class="t" style="left:760.0px;width:200px;text-align:center;top:87px;font-size:8.60px;line-height:8.60px;color:#3a4565;transform:scaleX(0.9302);transform-origin:50% 0;">Toolbar</div>
<div class="t" style="left:801.0px;width:200px;text-align:center;top:78px;font-size:8.60px;line-height:8.60px;color:#3a4565;transform:scaleX(0.9302);transform-origin:50% 0;">Avoidance</div>
<div class="t" style="left:801.0px;width:200px;text-align:center;top:87px;font-size:8.60px;line-height:8.60px;color:#3a4565;transform:scaleX(0.9302);transform-origin:50% 0;">in time</div>
<div class="t" style="left:853.0px;width:200px;text-align:center;top:78px;font-size:8.60px;line-height:8.60px;color:#3a4565;transform:scaleX(0.9302);transform-origin:50% 0;">Kinematic follow</div>
<div class="t" style="left:853.0px;width:200px;text-align:center;top:87px;font-size:8.60px;line-height:8.60px;color:#3a4565;transform:scaleX(0.9302);transform-origin:50% 0;">path backwards</div>
<div class="t" style="left:916.0px;width:200px;text-align:center;top:78px;font-size:8.60px;line-height:8.60px;color:#a3abb8;transform:scaleX(0.9302);transform-origin:50% 0;">Crash backwards</div>
<div class="t" style="left:916.0px;width:200px;text-align:center;top:87px;font-size:8.60px;line-height:8.60px;color:#a3abb8;transform:scaleX(0.9302);transform-origin:50% 0;">simulation</div>
<svg class="a" style="left:807px;top:52px;" width="19" height="21" viewBox="0 0 19 21"><rect x="0.5" y="0.5" width="17" height="19" rx="1.5" fill="#5c625b" stroke="#444"/><rect x="2" y="3" width="14" height="4" fill="#a8d878"/><g fill="#828a80"><rect x="2.5" y="9" width="2.5" height="2"/><rect x="6.5" y="9" width="2.5" height="2"/><rect x="10.5" y="9" width="2.5" height="2"/><rect x="2.5" y="12.5" width="2.5" height="2"/><rect x="6.5" y="12.5" width="2.5" height="2"/><rect x="10.5" y="12.5" width="2.5" height="2"/><rect x="2.5" y="16" width="2.5" height="2"/><rect x="6.5" y="16" width="2.5" height="2"/><rect x="10.5" y="16" width="2.5" height="2"/></g></svg>
<svg class="a" style="left:849px;top:52px;" width="23" height="21" viewBox="0 0 23 21"><rect x="0.5" y="1" width="6" height="19" fill="#f2f2f2" stroke="#888" stroke-width="0.8"/><path d="M1.5 4l1.5 1.5 3-3M1.5 10l1.5 1.5 3-3M1.5 16l1.5 1.5 3-3" stroke="#444" fill="none" stroke-width="0.8"/><rect x="7.5" y="0.5" width="14" height="19.5" rx="1" fill="#eef0ee" stroke="#666"/><rect x="9" y="2.5" width="11" height="3.5" fill="#a8d878" stroke="#555" stroke-width="0.5"/><path d="M9 8h11M9 11h11M9 14h11M9 17h11M12 7v12M15 7v12M18 7v12" stroke="#777" stroke-width="0.7"/></svg>
<svg class="a" style="left:890px;top:51px;" width="23" height="23" viewBox="0 0 23 23"><circle cx="11.3" cy="11.6" r="10" fill="#fff" stroke="#3a5ad0" stroke-width="2.2"/><circle cx="11.3" cy="11.6" r="10.8" fill="none" stroke="#8aa0e0" stroke-width="0.6"/><path d="M11.3 11.6 L5 8 M11.3 11.6 L17 10 M11.3 11.6 L8 17" stroke="#334" stroke-width="0.9"/><path d="M11.3 11.6 L7 18" stroke="#d04040" stroke-width="0.6"/></svg>
<svg class="a" style="left:942px;top:52px;" width="23" height="22" viewBox="0 0 23 22"><rect x="0.5" y="0" width="7" height="21" fill="#d01818"/><rect x="1.5" y="8" width="5" height="4" fill="#9ee0e0"/><rect x="8" y="13" width="14" height="8" fill="#d01818"/><rect x="11" y="15" width="2.5" height="5" fill="#9ee0e0"/><rect x="17" y="15" width="2" height="5" fill="#fff"/><path d="M6 2 Q17 3 21 13 M6 5 Q15 7 18 13" stroke="#222" stroke-width="0.8" fill="none"/></svg>
<svg class="a" style="left:1005px;top:52px;" width="23" height="21" viewBox="0 0 23 21"><rect x="0.5" y="6" width="9" height="10" fill="#8a93a2"/><rect x="8" y="0.5" width="8" height="13" fill="#8a93a2"/><rect x="2" y="9" width="2" height="5" fill="#dde2e8"/><rect x="10" y="2.5" width="4" height="2" fill="#dde2e8"/><path d="M2 1 L8 7" stroke="#8a93a2" stroke-width="0.8"/><path d="M11 10 L18 10 L16.2 11.8 L21.5 17.1 L18.6 20 L13.3 14.7 L11 17Z" fill="#b2bbc7" stroke="#8a93a2" stroke-width="0.8"/></svg>
<div class="a" style="left:0px;top:113px;width:1280px;height:535px;background:#fff"></div>
<div class="a" style="left:0px;top:113px;width:2px;height:535px;background:#a0a0a0"></div>
<div class="a" style="left:1268px;top:113px;width:10px;height:535px;background:#f0f0f0"></div>
<div class="a" style="left:1268px;top:361px;width:10px;height:38px;background:#c8c8c8"></div>
<div class="a" style="left:2px;top:648px;width:1278px;height:12px;background:#f0f0f0"></div>
<div class="a" style="left:535px;top:649px;width:198px;height:10px;background:#a8a8a8"></div>
<div class="a" style="left:0px;top:660px;width:1280px;height:2px;background:#c9d4d9"></div>
<div class="a" style="left:0px;top:662px;width:1280px;height:16px;background:#e6ecf2"></div>
<div class="a" style="left:7.5px;top:662.5px;width:1263px;height:15px;background:#eceeef;border-left:1px solid #d6dde4"></div>
<div class="a" style="left:0px;top:677px;width:1280px;height:2px;background:#b9c5ce"></div>
<div class="a" style="left:1270px;top:662px;width:10px;height:15px;background:#c6d8ee"></div>
<div class="a" style="left:0px;top:679px;width:1280px;height:14px;background:linear-gradient(#cde2f9 0%,#bcd7f6 50%,#b4d1f3 100%)"></div>
<svg class="a" style="left:500px;top:190px;" width="320" height="310" viewBox="0 0 320 310"><defs><linearGradient id="rw" x1="0" x2="1"><stop offset="0" stop-color="#5a5a5a"/><stop offset="1" stop-color="#9a9a9a"/></linearGradient></defs>
<path d="M47 104 L235 104 Q252 104 252 126 L252 170 Q252 192 235 192 L47 192 Q27 190 22 172 L19 158 L19 138 L22 124 Q27 106 47 104Z" fill="#111"/>
<path d="M34 109 Q45 107 52 110 L55 186 Q45 190 34 187 Q25 184 23 160 L23 136 Q25 112 34 109Z" fill="#2a2a2a"/>
<path d="M25 116 Q28 108 33 107 L31 120 Q27 121 24 121Z" fill="#8e1422"/><path d="M25 180.5 Q28 188.5 33 189.5 L31 176.5 Q27 175.5 24 175.5Z" fill="#8e1422"/>
<path d="M76 105 h69 v11 h-66 Q72 112 76 105Z" fill="#8e8e8e"/><path d="M82 108 h58 v5 h-55Z" fill="#333"/>
<path d="M76 191 h69 v-11 h-66 Q72 184 76 191Z" fill="#8e8e8e"/><path d="M82 188 h58 v-5 h-55Z" fill="#333"/>
<path d="M52 123 Q50 148 52 172 L84 172 L84 123Z" fill="url(#rw)"/>
<rect x="117" y="123" width="8" height="27" fill="#6a2a2a"/><rect x="117" y="150" width="8" height="26" fill="#2a3a8a"/>
<path d="M166 106 Q215 150 166 192 L162 190 Q178 150 162 108Z" fill="#626262"/>
<rect x="251" y="130" width="6" height="38" fill="#777"/>
<path d="M203 134 h36 v12 l-18 16 l-18 -16Z" fill="#d8c8d0" stroke="#777" stroke-width="1"/><path d="M214 140 Q221 136 228 140 Q226 150 221 156 Q216 150 214 140Z" fill="#c03050"/>
<text transform="translate(91,123) rotate(90)" x="0" y="0" font-family="Liberation Sans" font-weight="bold" font-size="25" fill="#f2f2f2" textLength="50" lengthAdjust="spacingAndGlyphs">0926</text><polygon points="154.0,8 153.9,12 153.8,16 153.7,20 153.6,24 153.5,28 153.4,32 153.3,36 153.2,40 153.1,44 153.0,48 152.7,52 152.1,56 151.5,60 150.9,64 150.3,68 149.6,72 148.8,76 148.0,80 147.2,84 146.4,88 145.6,92 144.8,96 144.0,100 143.6,104 143.2,108 142.8,112 142.4,116 142.0,120 141.6,124 141.2,128 140.8,132 140.4,136 140.0,140 140.1,144 140.2,148 140.3,152 140.4,156 140.5,160 140.6,164 140.7,168 140.8,172 140.9,176 141.0,180 141.9,184 142.9,188 143.8,192 144.7,196 145.7,200 146.6,204 147.5,208 148.3,212 149.0,216 149.7,220 150.3,224 151.0,228 151.7,232 152.3,236 153.0,240 153.1,244 153.3,248 153.4,252 153.6,256 153.7,260 153.9,264 154.0,268 154.2,272 154.3,276 154.5,280 154.6,284 154.8,288 154.9,292 162.0,292 162.0,288 162.0,284 162.0,280 162.0,276 162.0,272 162.0,268 162.0,264 162.0,260 162.0,256 162.0,252 162.0,248 162.0,244 162.0,240 162.4,236 162.8,232 163.2,228 163.6,224 164.0,220 164.4,216 164.8,212 165.1,208 165.4,204 165.7,200 165.9,196 166.2,192 166.5,188 166.7,184 167.0,180 167.1,176 167.2,172 167.3,168 167.4,164 167.5,160 167.6,156 167.7,152 167.8,148 167.9,144 168.0,140 167.8,136 167.6,132 167.4,128 167.2,124 167.0,120 166.8,116 166.6,112 166.4,108 166.2,104 166.0,100 165.7,96 165.5,92 165.2,88 164.9,84 164.7,80 164.4,76 164.1,72 163.9,68 163.7,64 163.5,60 163.3,56 163.1,52 163.0,48 162.9,44 162.8,40 162.7,36 162.6,32 162.5,28 162.4,24 162.3,20 162.2,16 162.1,12 162.0,8" fill="#5cc6b9" opacity="0.55"/><rect x="154.0" y="9.2" width="4.4" height="4.2" fill="none" stroke="#1fa595" stroke-width="1"/><rect x="157.6" y="8.7" width="4.4" height="4.2" fill="none" stroke="#1fa595" stroke-width="1"/><rect x="153.9" y="14.0" width="6.0" height="4.2" fill="none" stroke="#1fa595" stroke-width="1"/><rect x="158.5" y="13.4" width="3.6" height="4.2" fill="none" stroke="#1fa595" stroke-width="1"/><rect x="153.7" y="18.5" width="5.5" height="4.2" fill="none" stroke="#1fa595" stroke-width="1"/><rect x="158.5" y="18.7" width="3.7" height="4.2" fill="none" stroke="#1fa595" stroke-width="1"/><rect x="153.6" y="24.3" width="6.5" height="4.2" fill="none" stroke="#1fa595" stroke-width="1"/><rect x="159.5" y="23.4" width="2.9" height="4.2" fill="none" stroke="#1fa595" stroke-width="1"/><rect x="153.5" y="28.5" width="5.2" height="4.2" fill="none" stroke="#1fa595" stroke-width="1"/><rect x="158.4" y="28.6" width="4.1" height="4.2" fill="none" stroke="#1fa595" stroke-width="1"/><rect x="153.4" y="34.5" width="4.3" height="4.2" fill="none" stroke="#1fa595" stroke-width="1"/><rect x="156.7" y="33.8" width="5.4" height="4.2" fill="none" stroke="#1fa595" stroke-width="1"/><rect x="153.3" y="38.4" width="4.5" height="4.2" fill="none" stroke="#1fa595" stroke-width="1"/><rect x="157.3" y="39.3" width="4.6" height="4.2" fill="none" stroke="#1fa595" stroke-width="1"/><rect x="160.4" y="39.5" width="2.4" height="4.2" fill="none" stroke="#1fa595" stroke-width="1"/><rect x="153.1" y="44.1" width="5.9" height="4.2" fill="none" stroke="#1fa595" stroke-width="1"/><rect x="158.2" y="44.0" width="4.3" height="4.2" fill="none" stroke="#1fa595" stroke-width="1"/><rect x="153.0" y="49.5" width="4.5" height="4.2" fill="none" stroke="#1fa595" stroke-width="1"/><rect x="157.1" y="48.8" width="5.0" height="4.2" fill="none" stroke="#1fa595" stroke-width="1"/><rect x="160.9" y="49.6" width="2.0" height="4.2" fill="none" stroke="#1fa595" stroke-width="1"/><rect x="152.4" y="53.5" width="4.1" height="4.2" fill="none" stroke="#1fa595" stroke-width="1"/><rect x="155.9" y="54.0" width="6.5" height="4.2" fill="none" stroke="#1fa595" stroke-width="1"/><rect x="160.9" y="54.3" width="2.3" height="4.2" fill="none" stroke="#1fa595" stroke-width="1"/><rect x="151.6" y="59.1" width="5.5" height="4.2" fill="none" stroke="#1fa595" stroke-width="1"/><rect x="156.2" y="58.6" width="4.5" height="4.2" fill="none" stroke="#1fa595" stroke-width="1"/><rect x="159.4" y="58.8" width="4.1" height="4.2" fill="none" stroke="#1fa595" stroke-width="1"/><rect x="150.9" y="63.5" width="4.8" height="4.2" fill="none" stroke="#1fa595" stroke-width="1"/><rect x="153.9" y="64.3" width="6.0" height="4.2" fill="none" stroke="#1fa595" stroke-width="1"/><rect x="158.3" y="64.2" width="5.4" height="4.2" fill="none" stroke="#1fa595" stroke-width="1"/><rect x="150.1" y="68.9" width="6.4" height="4.2" fill="none" stroke="#1fa595" stroke-width="1"/><rect x="156.2" y="69.1" width="6.4" height="4.2" fill="none" stroke="#1fa595" stroke-width="1"/><rect x="149.2" y="73.9" width="5.2" height="4.2" fill="none" stroke="#1fa595" stroke-width="1"/><rect x="152.8" y="73.6" width="6.2" height="4.2" fill="none" stroke="#1fa595" stroke-width="1"/><rect x="156.7" y="74.3" width="6.0" height="4.2" fill="none" stroke="#1fa595" stroke-width="1"/><rect x="161.3" y="73.5" width="3.0" height="4.2" fill="none" stroke="#1fa595" stroke-width="1"/><rect x="148.2" y="78.9" width="4.7" height="4.2" fill="none" stroke="#1fa595" stroke-width="1"/><rect x="151.3" y="78.8" width="4.2" height="4.2" fill="none" stroke="#1fa595" stroke-width="1"/><rect x="155.1" y="79.3" width="6.5" height="4.2" fill="none" stroke="#1fa595" stroke-width="1"/><rect x="160.1" y="79.6" width="4.5" height="4.2" fill="none" stroke="#1fa595" stroke-width="1"/><rect x="147.2" y="83.4" width="5.8" height="4.2" fill="none" stroke="#1fa595" stroke-width="1"/><rect x="151.1" y="84.4" width="6.1" height="4.2" fill="none" stroke="#1fa595" stroke-width="1"/><rect x="156.7" y="83.9" width="5.5" height="4.2" fill="none" stroke="#1fa595" stroke-width="1"/><rect x="161.1" y="83.8" width="3.8" height="4.2" fill="none" stroke="#1fa595" stroke-width="1"/><rect x="146.2" y="89.3" width="4.7" height="4.2" fill="none" stroke="#1fa595" stroke-width="1"/><rect x="149.0" y="89.5" width="5.7" height="4.2" fill="none" stroke="#1fa595" stroke-width="1"/><rect x="152.5" y="89.2" width="5.5" height="4.2" fill="none" stroke="#1fa595" stroke-width="1"/><rect x="157.4" y="88.7" width="5.5" height="4.2" fill="none" stroke="#1fa595" stroke-width="1"/><rect x="161.5" y="89.5" width="3.8" height="4.2" fill="none" stroke="#1fa595" stroke-width="1"/><rect x="145.2" y="93.5" width="4.2" height="4.2" fill="none" stroke="#1fa595" stroke-width="1"/><rect x="147.8" y="93.6" width="5.1" height="4.2" fill="none" stroke="#1fa595" stroke-width="1"/><rect x="152.4" y="93.6" width="5.6" height="4.2" fill="none" stroke="#1fa595" stroke-width="1"/><rect x="156.8" y="94.0" width="4.8" height="4.2" fill="none" stroke="#1fa595" stroke-width="1"/><rect x="160.1" y="93.6" width="4.4" height="4.2" fill="none" stroke="#1fa595" stroke-width="1"/><rect x="163.3" y="94.1" width="2.3" height="4.2" fill="none" stroke="#1fa595" stroke-width="1"/><rect x="144.2" y="99.4" width="5.8" height="4.2" fill="none" stroke="#1fa595" stroke-width="1"/><rect x="149.2" y="98.4" width="6.0" height="4.2" fill="none" stroke="#1fa595" stroke-width="1"/><rect x="153.8" y="99.3" width="4.2" height="4.2" fill="none" stroke="#1fa595" stroke-width="1"/><rect x="156.5" y="98.7" width="5.8" height="4.2" fill="none" stroke="#1fa595" stroke-width="1"/><rect x="161.4" y="98.5" width="4.5" height="4.2" fill="none" stroke="#1fa595" stroke-width="1"/><rect x="143.6" y="104.5" width="4.8" height="4.2" fill="none" stroke="#1fa595" stroke-width="1"/><rect x="147.0" y="104.1" width="5.3" height="4.2" fill="none" stroke="#1fa595" stroke-width="1"/><rect x="151.9" y="104.1" width="4.2" height="4.2" fill="none" stroke="#1fa595" stroke-width="1"/><rect x="155.2" y="104.6" width="5.8" height="4.2" fill="none" stroke="#1fa595" stroke-width="1"/><rect x="159.3" y="104.0" width="5.7" height="4.2" fill="none" stroke="#1fa595" stroke-width="1"/><rect x="163.9" y="104.4" width="2.3" height="4.2" fill="none" stroke="#1fa595" stroke-width="1"/><rect x="143.1" y="108.8" width="4.9" height="4.2" fill="none" stroke="#1fa595" stroke-width="1"/><rect x="147.7" y="108.5" width="4.3" height="4.2" fill="none" stroke="#1fa595" stroke-width="1"/><rect x="150.4" y="109.3" width="6.0" height="4.2" fill="none" stroke="#1fa595" stroke-width="1"/><rect x="155.0" y="108.4" width="5.6" height="4.2" fill="none" stroke="#1fa595" stroke-width="1"/><rect x="159.6" y="109.0" width="5.1" height="4.2" fill="none" stroke="#1fa595" stroke-width="1"/><rect x="163.3" y="108.7" width="3.1" height="4.2" fill="none" stroke="#1fa595" stroke-width="1"/><rect x="142.6" y="113.7" width="5.1" height="4.2" fill="none" stroke="#1fa595" stroke-width="1"/><rect x="146.9" y="114.3" width="6.0" height="4.2" fill="none" stroke="#1fa595" stroke-width="1"/><rect x="151.5" y="113.9" width="4.6" height="4.2" fill="none" stroke="#1fa595" stroke-width="1"/><rect x="155.0" y="114.6" width="5.6" height="4.2" fill="none" stroke="#1fa595" stroke-width="1"/><rect x="158.5" y="114.0" width="5.2" height="4.2" fill="none" stroke="#1fa595" stroke-width="1"/><rect x="163.0" y="114.3" width="3.7" height="4.2" fill="none" stroke="#1fa595" stroke-width="1"/><rect x="142.1" y="119.2" width="5.9" height="4.2" fill="none" stroke="#1fa595" stroke-width="1"/><rect x="147.4" y="119.2" width="5.7" height="4.2" fill="none" stroke="#1fa595" stroke-width="1"/><rect x="151.4" y="118.9" width="6.3" height="4.2" fill="none" stroke="#1fa595" stroke-width="1"/><rect x="156.5" y="119.6" width="6.1" height="4.2" fill="none" stroke="#1fa595" stroke-width="1"/><rect x="162.2" y="118.8" width="4.0" height="4.2" fill="none" stroke="#1fa595" stroke-width="1"/><rect x="141.6" y="123.6" width="5.0" height="4.2" fill="none" stroke="#1fa595" stroke-width="1"/><rect x="145.6" y="123.8" width="4.2" height="4.2" fill="none" stroke="#1fa595" stroke-width="1"/><rect x="149.5" y="124.0" width="5.9" height="4.2" fill="none" stroke="#1fa595" stroke-width="1"/><rect x="153.2" y="124.2" width="6.4" height="4.2" fill="none" stroke="#1fa595" stroke-width="1"/><rect x="157.5" y="124.2" width="4.8" height="4.2" fill="none" stroke="#1fa595" stroke-width="1"/><rect x="161.5" y="124.5" width="4.7" height="4.2" fill="none" stroke="#1fa595" stroke-width="1"/><rect x="164.9" y="124.4" width="2.3" height="4.2" fill="none" stroke="#1fa595" stroke-width="1"/><rect x="141.1" y="128.6" width="5.7" height="4.2" fill="none" stroke="#1fa595" stroke-width="1"/><rect x="145.7" y="128.9" width="4.7" height="4.2" fill="none" stroke="#1fa595" stroke-width="1"/><rect x="150.1" y="128.9" width="5.2" height="4.2" fill="none" stroke="#1fa595" stroke-width="1"/><rect x="154.3" y="128.6" width="4.7" height="4.2" fill="none" stroke="#1fa595" stroke-width="1"/><rect x="157.7" y="128.6" width="4.7" height="4.2" fill="none" stroke="#1fa595" stroke-width="1"/><rect x="162.1" y="129.4" width="4.1" height="4.2" fill="none" stroke="#1fa595" stroke-width="1"/><rect x="140.6" y="133.4" width="5.8" height="4.2" fill="none" stroke="#1fa595" stroke-width="1"/><rect x="145.1" y="134.1" width="4.1" height="4.2" fill="none" stroke="#1fa595" stroke-width="1"/><rect x="148.5" y="133.4" width="4.6" height="4.2" fill="none" stroke="#1fa595" stroke-width="1"/><rect x="152.2" y="133.8" width="4.2" height="4.2" fill="none" stroke="#1fa595" stroke-width="1"/><rect x="155.4" y="133.8" width="6.2" height="4.2" fill="none" stroke="#1fa595" stroke-width="1"/><rect x="159.4" y="134.4" width="6.0" height="4.2" fill="none" stroke="#1fa595" stroke-width="1"/><rect x="164.1" y="133.6" width="3.6" height="4.2" fill="none" stroke="#1fa595" stroke-width="1"/><rect x="140.1" y="138.7" width="5.4" height="4.2" fill="none" stroke="#1fa595" stroke-width="1"/><rect x="144.8" y="139.5" width="6.1" height="4.2" fill="none" stroke="#1fa595" stroke-width="1"/><rect x="150.4" y="139.1" width="4.0" height="4.2" fill="none" stroke="#1fa595" stroke-width="1"/><rect x="152.9" y="139.3" width="6.2" height="4.2" fill="none" stroke="#1fa595" stroke-width="1"/><rect x="158.3" y="138.5" width="4.5" height="4.2" fill="none" stroke="#1fa595" stroke-width="1"/><rect x="162.3" y="139.1" width="5.5" height="4.2" fill="none" stroke="#1fa595" stroke-width="1"/><rect x="140.1" y="143.8" width="6.0" height="4.2" fill="none" stroke="#1fa595" stroke-width="1"/><rect x="144.3" y="143.8" width="4.9" height="4.2" fill="none" stroke="#1fa595" stroke-width="1"/><rect x="148.3" y="143.5" width="6.2" height="4.2" fill="none" stroke="#1fa595" stroke-width="1"/><rect x="152.2" y="144.2" width="5.3" height="4.2" fill="none" stroke="#1fa595" stroke-width="1"/><rect x="155.7" y="143.5" width="4.7" height="4.2" fill="none" stroke="#1fa595" stroke-width="1"/><rect x="158.5" y="144.2" width="5.2" height="4.2" fill="none" stroke="#1fa595" stroke-width="1"/><rect x="162.9" y="143.5" width="4.4" height="4.2" fill="none" stroke="#1fa595" stroke-width="1"/><rect x="140.2" y="148.9" width="5.3" height="4.2" fill="none" stroke="#1fa595" stroke-width="1"/><rect x="144.7" y="149.0" width="5.8" height="4.2" fill="none" stroke="#1fa595" stroke-width="1"/><rect x="148.4" y="148.7" width="6.1" height="4.2" fill="none" stroke="#1fa595" stroke-width="1"/><rect x="152.1" y="149.0" width="4.9" height="4.2" fill="none" stroke="#1fa595" stroke-width="1"/><rect x="156.1" y="149.3" width="4.4" height="4.2" fill="none" stroke="#1fa595" stroke-width="1"/><rect x="159.5" y="149.4" width="4.4" height="4.2" fill="none" stroke="#1fa595" stroke-width="1"/><rect x="163.4" y="149.2" width="4.4" height="4.2" fill="none" stroke="#1fa595" stroke-width="1"/><rect x="140.4" y="154.5" width="5.9" height="4.2" fill="none" stroke="#1fa595" stroke-width="1"/><rect x="145.0" y="154.6" width="6.3" height="4.2" fill="none" stroke="#1fa595" stroke-width="1"/><rect x="149.6" y="154.5" width="6.4" height="4.2" fill="none" stroke="#1fa595" stroke-width="1"/><rect x="155.2" y="153.8" width="4.0" height="4.2" fill="none" stroke="#1fa595" stroke-width="1"/><rect x="158.5" y="154.3" width="5.5" height="4.2" fill="none" stroke="#1fa595" stroke-width="1"/><rect x="163.1" y="154.5" width="4.4" height="4.2" fill="none" stroke="#1fa595" stroke-width="1"/><rect x="140.5" y="158.6" width="6.2" height="4.2" fill="none" stroke="#1fa595" stroke-width="1"/><rect x="146.4" y="159.3" width="5.4" height="4.2" fill="none" stroke="#1fa595" stroke-width="1"/><rect x="151.0" y="158.8" width="6.2" height="4.2" fill="none" stroke="#1fa595" stroke-width="1"/><rect x="154.9" y="158.6" width="5.0" height="4.2" fill="none" stroke="#1fa595" stroke-width="1"/><rect x="158.9" y="158.8" width="6.0" height="4.2" fill="none" stroke="#1fa595" stroke-width="1"/><rect x="162.8" y="158.9" width="4.1" height="4.2" fill="none" stroke="#1fa595" stroke-width="1"/><rect x="140.6" y="164.2" width="4.1" height="4.2" fill="none" stroke="#1fa595" stroke-width="1"/><rect x="143.3" y="164.5" width="4.3" height="4.2" fill="none" stroke="#1fa595" stroke-width="1"/><rect x="146.7" y="164.0" width="6.2" height="4.2" fill="none" stroke="#1fa595" stroke-width="1"/><rect x="150.7" y="163.9" width="4.6" height="4.2" fill="none" stroke="#1fa595" stroke-width="1"/><rect x="154.5" y="164.3" width="5.9" height="4.2" fill="none" stroke="#1fa595" stroke-width="1"/><rect x="159.4" y="163.9" width="4.6" height="4.2" fill="none" stroke="#1fa595" stroke-width="1"/><rect x="162.8" y="163.7" width="4.6" height="4.2" fill="none" stroke="#1fa595" stroke-width="1"/><rect x="140.7" y="168.4" width="5.1" height="4.2" fill="none" stroke="#1fa595" stroke-width="1"/><rect x="145.3" y="169.4" width="5.5" height="4.2" fill="none" stroke="#1fa595" stroke-width="1"/><rect x="150.0" y="169.6" width="5.8" height="4.2" fill="none" stroke="#1fa595" stroke-width="1"/><rect x="154.2" y="168.4" width="5.0" height="4.2" fill="none" stroke="#1fa595" stroke-width="1"/><rect x="158.4" y="169.1" width="5.5" height="4.2" fill="none" stroke="#1fa595" stroke-width="1"/><rect x="163.6" y="168.7" width="3.7" height="4.2" fill="none" stroke="#1fa595" stroke-width="1"/><rect x="140.9" y="174.0" width="6.0" height="4.2" fill="none" stroke="#1fa595" stroke-width="1"/><rect x="144.6" y="174.4" width="4.9" height="4.2" fill="none" stroke="#1fa595" stroke-width="1"/><rect x="148.4" y="173.9" width="5.2" height="4.2" fill="none" stroke="#1fa595" stroke-width="1"/><rect x="152.6" y="174.2" width="5.5" height="4.2" fill="none" stroke="#1fa595" stroke-width="1"/><rect x="157.6" y="173.8" width="5.9" height="4.2" fill="none" stroke="#1fa595" stroke-width="1"/><rect x="161.6" y="174.4" width="5.5" height="4.2" fill="none" stroke="#1fa595" stroke-width="1"/><rect x="141.0" y="179.4" width="4.5" height="4.2" fill="none" stroke="#1fa595" stroke-width="1"/><rect x="145.1" y="178.8" width="4.2" height="4.2" fill="none" stroke="#1fa595" stroke-width="1"/><rect x="148.5" y="179.4" width="4.4" height="4.2" fill="none" stroke="#1fa595" stroke-width="1"/><rect x="151.5" y="178.8" width="5.7" height="4.2" fill="none" stroke="#1fa595" stroke-width="1"/><rect x="155.4" y="179.0" width="4.5" height="4.2" fill="none" stroke="#1fa595" stroke-width="1"/><rect x="159.2" y="179.2" width="4.5" height="4.2" fill="none" stroke="#1fa595" stroke-width="1"/><rect x="162.5" y="178.8" width="4.5" height="4.2" fill="none" stroke="#1fa595" stroke-width="1"/><rect x="141.9" y="183.5" width="4.4" height="4.2" fill="none" stroke="#1fa595" stroke-width="1"/><rect x="145.6" y="183.5" width="5.0" height="4.2" fill="none" stroke="#1fa595" stroke-width="1"/><rect x="150.2" y="183.4" width="5.6" height="4.2" fill="none" stroke="#1fa595" stroke-width="1"/><rect x="155.0" y="183.9" width="5.5" height="4.2" fill="none" stroke="#1fa595" stroke-width="1"/><rect x="159.2" y="183.8" width="6.4" height="4.2" fill="none" stroke="#1fa595" stroke-width="1"/><rect x="164.5" y="183.8" width="2.2" height="4.2" fill="none" stroke="#1fa595" stroke-width="1"/><rect x="143.1" y="189.2" width="5.9" height="4.2" fill="none" stroke="#1fa595" stroke-width="1"/><rect x="147.6" y="188.7" width="5.3" height="4.2" fill="none" stroke="#1fa595" stroke-width="1"/><rect x="152.2" y="189.2" width="4.0" height="4.2" fill="none" stroke="#1fa595" stroke-width="1"/><rect x="155.3" y="189.1" width="4.6" height="4.2" fill="none" stroke="#1fa595" stroke-width="1"/><rect x="158.9" y="189.0" width="4.2" height="4.2" fill="none" stroke="#1fa595" stroke-width="1"/><rect x="161.7" y="188.8" width="4.7" height="4.2" fill="none" stroke="#1fa595" stroke-width="1"/><rect x="144.3" y="193.5" width="4.5" height="4.2" fill="none" stroke="#1fa595" stroke-width="1"/><rect x="147.3" y="194.1" width="4.4" height="4.2" fill="none" stroke="#1fa595" stroke-width="1"/><rect x="151.2" y="193.5" width="4.6" height="4.2" fill="none" stroke="#1fa595" stroke-width="1"/><rect x="154.8" y="193.9" width="4.3" height="4.2" fill="none" stroke="#1fa595" stroke-width="1"/><rect x="158.5" y="194.2" width="4.5" height="4.2" fill="none" stroke="#1fa595" stroke-width="1"/><rect x="162.1" y="193.7" width="4.0" height="4.2" fill="none" stroke="#1fa595" stroke-width="1"/><rect x="145.4" y="198.6" width="4.2" height="4.2" fill="none" stroke="#1fa595" stroke-width="1"/><rect x="148.8" y="199.0" width="6.0" height="4.2" fill="none" stroke="#1fa595" stroke-width="1"/><rect x="153.9" y="198.8" width="4.0" height="4.2" fill="none" stroke="#1fa595" stroke-width="1"/><rect x="156.7" y="198.8" width="6.3" height="4.2" fill="none" stroke="#1fa595" stroke-width="1"/><rect x="162.2" y="199.0" width="3.5" height="4.2" fill="none" stroke="#1fa595" stroke-width="1"/><rect x="146.6" y="204.1" width="5.9" height="4.2" fill="none" stroke="#1fa595" stroke-width="1"/><rect x="150.5" y="203.5" width="6.3" height="4.2" fill="none" stroke="#1fa595" stroke-width="1"/><rect x="156.5" y="204.3" width="5.9" height="4.2" fill="none" stroke="#1fa595" stroke-width="1"/><rect x="161.1" y="203.8" width="4.3" height="4.2" fill="none" stroke="#1fa595" stroke-width="1"/><rect x="147.8" y="208.9" width="5.6" height="4.2" fill="none" stroke="#1fa595" stroke-width="1"/><rect x="152.7" y="208.7" width="4.1" height="4.2" fill="none" stroke="#1fa595" stroke-width="1"/><rect x="155.3" y="209.4" width="4.8" height="4.2" fill="none" stroke="#1fa595" stroke-width="1"/><rect x="159.5" y="208.8" width="4.4" height="4.2" fill="none" stroke="#1fa595" stroke-width="1"/><rect x="162.3" y="208.9" width="2.8" height="4.2" fill="none" stroke="#1fa595" stroke-width="1"/><rect x="148.7" y="214.4" width="4.9" height="4.2" fill="none" stroke="#1fa595" stroke-width="1"/><rect x="152.4" y="214.2" width="5.7" height="4.2" fill="none" stroke="#1fa595" stroke-width="1"/><rect x="156.7" y="213.8" width="5.4" height="4.2" fill="none" stroke="#1fa595" stroke-width="1"/><rect x="160.4" y="213.8" width="4.2" height="4.2" fill="none" stroke="#1fa595" stroke-width="1"/><rect x="149.5" y="219.5" width="4.5" height="4.2" fill="none" stroke="#1fa595" stroke-width="1"/><rect x="152.8" y="218.4" width="4.5" height="4.2" fill="none" stroke="#1fa595" stroke-width="1"/><rect x="155.9" y="218.8" width="6.2" height="4.2" fill="none" stroke="#1fa595" stroke-width="1"/><rect x="161.0" y="219.2" width="3.1" height="4.2" fill="none" stroke="#1fa595" stroke-width="1"/><rect x="150.3" y="224.0" width="5.8" height="4.2" fill="none" stroke="#1fa595" stroke-width="1"/><rect x="154.6" y="224.1" width="4.7" height="4.2" fill="none" stroke="#1fa595" stroke-width="1"/><rect x="158.8" y="224.0" width="4.8" height="4.2" fill="none" stroke="#1fa595" stroke-width="1"/><rect x="151.2" y="229.4" width="6.2" height="4.2" fill="none" stroke="#1fa595" stroke-width="1"/><rect x="155.2" y="229.3" width="5.7" height="4.2" fill="none" stroke="#1fa595" stroke-width="1"/><rect x="160.0" y="229.5" width="3.1" height="4.2" fill="none" stroke="#1fa595" stroke-width="1"/><rect x="152.0" y="233.8" width="6.5" height="4.2" fill="none" stroke="#1fa595" stroke-width="1"/><rect x="156.8" y="233.6" width="5.8" height="4.2" fill="none" stroke="#1fa595" stroke-width="1"/><rect x="152.8" y="238.7" width="5.6" height="4.2" fill="none" stroke="#1fa595" stroke-width="1"/><rect x="156.7" y="239.1" width="5.4" height="4.2" fill="none" stroke="#1fa595" stroke-width="1"/><rect x="153.1" y="244.4" width="6.0" height="4.2" fill="none" stroke="#1fa595" stroke-width="1"/><rect x="158.6" y="244.6" width="3.4" height="4.2" fill="none" stroke="#1fa595" stroke-width="1"/><rect x="153.3" y="249.0" width="5.8" height="4.2" fill="none" stroke="#1fa595" stroke-width="1"/><rect x="158.7" y="248.9" width="3.3" height="4.2" fill="none" stroke="#1fa595" stroke-width="1"/><rect x="153.5" y="253.6" width="4.7" height="4.2" fill="none" stroke="#1fa595" stroke-width="1"/><rect x="157.0" y="253.4" width="4.3" height="4.2" fill="none" stroke="#1fa595" stroke-width="1"/><rect x="159.7" y="254.3" width="2.3" height="4.2" fill="none" stroke="#1fa595" stroke-width="1"/><rect x="153.7" y="258.5" width="5.6" height="4.2" fill="none" stroke="#1fa595" stroke-width="1"/><rect x="158.1" y="258.9" width="3.9" height="4.2" fill="none" stroke="#1fa595" stroke-width="1"/><rect x="153.9" y="263.9" width="5.0" height="4.2" fill="none" stroke="#1fa595" stroke-width="1"/><rect x="158.2" y="263.8" width="3.8" height="4.2" fill="none" stroke="#1fa595" stroke-width="1"/><rect x="154.1" y="269.6" width="6.1" height="4.2" fill="none" stroke="#1fa595" stroke-width="1"/><rect x="158.3" y="268.8" width="3.7" height="4.2" fill="none" stroke="#1fa595" stroke-width="1"/><rect x="154.3" y="273.6" width="6.1" height="4.2" fill="none" stroke="#1fa595" stroke-width="1"/><rect x="158.7" y="273.8" width="3.3" height="4.2" fill="none" stroke="#1fa595" stroke-width="1"/><rect x="154.4" y="278.7" width="6.0" height="4.2" fill="none" stroke="#1fa595" stroke-width="1"/><rect x="159.7" y="278.8" width="2.3" height="4.2" fill="none" stroke="#1fa595" stroke-width="1"/><rect x="154.6" y="283.7" width="4.9" height="4.2" fill="none" stroke="#1fa595" stroke-width="1"/><rect x="157.6" y="283.6" width="4.4" height="4.2" fill="none" stroke="#1fa595" stroke-width="1"/><rect x="154.8" y="289.4" width="5.4" height="4.2" fill="none" stroke="#1fa595" stroke-width="1"/><rect x="159.6" y="288.6" width="2.4" height="4.2" fill="none" stroke="#1fa595" stroke-width="1"/><g transform="translate(216,64) rotate(-18)"><rect x="-4.5" y="-5" width="9" height="10" fill="none" stroke="#2bb0a2" stroke-width="1"/><path d="M-4.5 0h9M-2 -5v10M2 -5v10" stroke="#2bb0a2" stroke-width="0.7"/></g><g transform="translate(231,74) rotate(-35)"><rect x="-4.5" y="-5" width="9" height="10" fill="none" stroke="#2bb0a2" stroke-width="1"/><path d="M-4.5 0h9M-2 -5v10M2 -5v10" stroke="#2bb0a2" stroke-width="0.7"/></g><g transform="translate(171,80) rotate(15)"><rect x="-4.5" y="-5" width="9" height="10" fill="none" stroke="#2bb0a2" stroke-width="1"/><path d="M-4.5 0h9M-2 -5v10M2 -5v10" stroke="#2bb0a2" stroke-width="0.7"/></g><g transform="translate(200,86) rotate(-43)"><rect x="-4.5" y="-5" width="9" height="10" fill="none" stroke="#2bb0a2" stroke-width="1"/><path d="M-4.5 0h9M-2 -5v10M2 -5v10" stroke="#2bb0a2" stroke-width="0.7"/></g><g transform="translate(252,84) rotate(4)"><rect x="-4.5" y="-5" width="9" height="10" fill="none" stroke="#2bb0a2" stroke-width="1"/><path d="M-4.5 0h9M-2 -5v10M2 -5v10" stroke="#2bb0a2" stroke-width="0.7"/></g><g transform="translate(260,91) rotate(-13)"><rect x="-4.5" y="-5" width="9" height="10" fill="none" stroke="#2bb0a2" stroke-width="1"/><path d="M-4.5 0h9M-2 -5v10M2 -5v10" stroke="#2bb0a2" stroke-width="0.7"/></g><g transform="translate(290,96) rotate(-44)"><rect x="-4.5" y="-5" width="9" height="10" fill="none" stroke="#2bb0a2" stroke-width="1"/><path d="M-4.5 0h9M-2 -5v10M2 -5v10" stroke="#2bb0a2" stroke-width="0.7"/></g><g transform="translate(239,104) rotate(1)"><rect x="-4.5" y="-5" width="9" height="10" fill="none" stroke="#2bb0a2" stroke-width="1"/><path d="M-4.5 0h9M-2 -5v10M2 -5v10" stroke="#2bb0a2" stroke-width="0.7"/></g><g transform="translate(250,110) rotate(-46)"><rect x="-4.5" y="-5" width="9" height="10" fill="none" stroke="#2bb0a2" stroke-width="1"/><path d="M-4.5 0h9M-2 -5v10M2 -5v10" stroke="#2bb0a2" stroke-width="0.7"/></g><g transform="translate(272,104) rotate(-7)"><rect x="-4.5" y="-5" width="9" height="10" fill="none" stroke="#2bb0a2" stroke-width="1"/><path d="M-4.5 0h9M-2 -5v10M2 -5v10" stroke="#2bb0a2" stroke-width="0.7"/></g><g transform="translate(280,114) rotate(-43)"><rect x="-4.5" y="-5" width="9" height="10" fill="none" stroke="#2bb0a2" stroke-width="1"/><path d="M-4.5 0h9M-2 -5v10M2 -5v10" stroke="#2bb0a2" stroke-width="0.7"/></g><g transform="translate(265,116) rotate(-41)"><rect x="-4.5" y="-5" width="9" height="10" fill="none" stroke="#2bb0a2" stroke-width="1"/><path d="M-4.5 0h9M-2 -5v10M2 -5v10" stroke="#2bb0a2" stroke-width="0.7"/></g><g transform="translate(292,112) rotate(-8)"><rect x="-4.5" y="-5" width="9" height="10" fill="none" stroke="#2bb0a2" stroke-width="1"/><path d="M-4.5 0h9M-2 -5v10M2 -5v10" stroke="#2bb0a2" stroke-width="0.7"/></g><g transform="translate(184,101) rotate(33)"><rect x="-4.5" y="-5" width="9" height="10" fill="none" stroke="#2bb0a2" stroke-width="1"/><path d="M-4.5 0h9M-2 -5v10M2 -5v10" stroke="#2bb0a2" stroke-width="0.7"/></g><g transform="translate(207.5,111) rotate(-38)"><rect x="-4.5" y="-5" width="9" height="10" fill="none" stroke="#2bb0a2" stroke-width="1"/><path d="M-4.5 0h9M-2 -5v10M2 -5v10" stroke="#2bb0a2" stroke-width="0.7"/></g><g transform="translate(221,127.5) rotate(-28)"><rect x="-4.5" y="-5" width="9" height="10" fill="none" stroke="#2bb0a2" stroke-width="1"/><path d="M-4.5 0h9M-2 -5v10M2 -5v10" stroke="#2bb0a2" stroke-width="0.7"/></g><g transform="translate(277.5,125) rotate(13)"><rect x="-4.5" y="-5" width="9" height="10" fill="none" stroke="#2bb0a2" stroke-width="1"/><path d="M-4.5 0h9M-2 -5v10M2 -5v10" stroke="#2bb0a2" stroke-width="0.7"/></g><g transform="translate(287.5,132.5) rotate(45)"><rect x="-4.5" y="-5" width="9" height="10" fill="none" stroke="#2bb0a2" stroke-width="1"/><path d="M-4.5 0h9M-2 -5v10M2 -5v10" stroke="#2bb0a2" stroke-width="0.7"/></g><g transform="translate(295,145) rotate(8)"><rect x="-4.5" y="-5" width="9" height="10" fill="none" stroke="#2bb0a2" stroke-width="1"/><path d="M-4.5 0h9M-2 -5v10M2 -5v10" stroke="#2bb0a2" stroke-width="0.7"/></g><g transform="translate(172.5,134) rotate(-10)"><rect x="-4.5" y="-5" width="9" height="10" fill="none" stroke="#2bb0a2" stroke-width="1"/><path d="M-4.5 0h9M-2 -5v10M2 -5v10" stroke="#2bb0a2" stroke-width="0.7"/></g><g transform="translate(175,142.5) rotate(48)"><rect x="-4.5" y="-5" width="9" height="10" fill="none" stroke="#2bb0a2" stroke-width="1"/><path d="M-4.5 0h9M-2 -5v10M2 -5v10" stroke="#2bb0a2" stroke-width="0.7"/></g><g transform="translate(189,149) rotate(-45)"><rect x="-4.5" y="-5" width="9" height="10" fill="none" stroke="#2bb0a2" stroke-width="1"/><path d="M-4.5 0h9M-2 -5v10M2 -5v10" stroke="#2bb0a2" stroke-width="0.7"/></g><g transform="translate(232.5,139) rotate(36)"><rect x="-4.5" y="-5" width="9" height="10" fill="none" stroke="#2bb0a2" stroke-width="1"/><path d="M-4.5 0h9M-2 -5v10M2 -5v10" stroke="#2bb0a2" stroke-width="0.7"/></g><g transform="translate(252.5,119) rotate(-21)"><rect x="-4.5" y="-5" width="9" height="10" fill="none" stroke="#2bb0a2" stroke-width="1"/><path d="M-4.5 0h9M-2 -5v10M2 -5v10" stroke="#2bb0a2" stroke-width="0.7"/></g><g transform="translate(262.5,132.5) rotate(-36)"><rect x="-4.5" y="-5" width="9" height="10" fill="none" stroke="#2bb0a2" stroke-width="1"/><path d="M-4.5 0h9M-2 -5v10M2 -5v10" stroke="#2bb0a2" stroke-width="0.7"/></g><g transform="translate(270,140) rotate(-38)"><rect x="-4.5" y="-5" width="9" height="10" fill="none" stroke="#2bb0a2" stroke-width="1"/><path d="M-4.5 0h9M-2 -5v10M2 -5v10" stroke="#2bb0a2" stroke-width="0.7"/></g><g transform="translate(282.5,142.5) rotate(-19)"><rect x="-4.5" y="-5" width="9" height="10" fill="none" stroke="#2bb0a2" stroke-width="1"/><path d="M-4.5 0h9M-2 -5v10M2 -5v10" stroke="#2bb0a2" stroke-width="0.7"/></g><g transform="translate(277.5,155) rotate(32)"><rect x="-4.5" y="-5" width="9" height="10" fill="none" stroke="#2bb0a2" stroke-width="1"/><path d="M-4.5 0h9M-2 -5v10M2 -5v10" stroke="#2bb0a2" stroke-width="0.7"/></g><g transform="translate(287.5,162.5) rotate(-32)"><rect x="-4.5" y="-5" width="9" height="10" fill="none" stroke="#2bb0a2" stroke-width="1"/><path d="M-4.5 0h9M-2 -5v10M2 -5v10" stroke="#2bb0a2" stroke-width="0.7"/></g><g transform="translate(270,165) rotate(8)"><rect x="-4.5" y="-5" width="9" height="10" fill="none" stroke="#2bb0a2" stroke-width="1"/><path d="M-4.5 0h9M-2 -5v10M2 -5v10" stroke="#2bb0a2" stroke-width="0.7"/></g><g transform="translate(257.5,167.5) rotate(14)"><rect x="-4.5" y="-5" width="9" height="10" fill="none" stroke="#2bb0a2" stroke-width="1"/><path d="M-4.5 0h9M-2 -5v10M2 -5v10" stroke="#2bb0a2" stroke-width="0.7"/></g><g transform="translate(246,180) rotate(-13)"><rect x="-4.5" y="-5" width="9" height="10" fill="none" stroke="#2bb0a2" stroke-width="1"/><path d="M-4.5 0h9M-2 -5v10M2 -5v10" stroke="#2bb0a2" stroke-width="0.7"/></g><g transform="translate(260,177.5) rotate(5)"><rect x="-4.5" y="-5" width="9" height="10" fill="none" stroke="#2bb0a2" stroke-width="1"/><path d="M-4.5 0h9M-2 -5v10M2 -5v10" stroke="#2bb0a2" stroke-width="0.7"/></g><g transform="translate(275,180) rotate(-44)"><rect x="-4.5" y="-5" width="9" height="10" fill="none" stroke="#2bb0a2" stroke-width="1"/><path d="M-4.5 0h9M-2 -5v10M2 -5v10" stroke="#2bb0a2" stroke-width="0.7"/></g><g transform="translate(292.5,182.5) rotate(-44)"><rect x="-4.5" y="-5" width="9" height="10" fill="none" stroke="#2bb0a2" stroke-width="1"/><path d="M-4.5 0h9M-2 -5v10M2 -5v10" stroke="#2bb0a2" stroke-width="0.7"/></g><g transform="translate(278.79999999999995,190) rotate(-29)"><rect x="-4.5" y="-5" width="9" height="10" fill="none" stroke="#2bb0a2" stroke-width="1"/><path d="M-4.5 0h9M-2 -5v10M2 -5v10" stroke="#2bb0a2" stroke-width="0.7"/></g><g transform="translate(290,192.5) rotate(18)"><rect x="-4.5" y="-5" width="9" height="10" fill="none" stroke="#2bb0a2" stroke-width="1"/><path d="M-4.5 0h9M-2 -5v10M2 -5v10" stroke="#2bb0a2" stroke-width="0.7"/></g><g transform="translate(217.5,170) rotate(-7)"><rect x="-4.5" y="-5" width="9" height="10" fill="none" stroke="#2bb0a2" stroke-width="1"/><path d="M-4.5 0h9M-2 -5v10M2 -5v10" stroke="#2bb0a2" stroke-width="0.7"/></g><g transform="translate(202.5,180) rotate(-19)"><rect x="-4.5" y="-5" width="9" height="10" fill="none" stroke="#2bb0a2" stroke-width="1"/><path d="M-4.5 0h9M-2 -5v10M2 -5v10" stroke="#2bb0a2" stroke-width="0.7"/></g><g transform="translate(218.79999999999995,210) rotate(9)"><rect x="-4.5" y="-5" width="9" height="10" fill="none" stroke="#2bb0a2" stroke-width="1"/><path d="M-4.5 0h9M-2 -5v10M2 -5v10" stroke="#2bb0a2" stroke-width="0.7"/></g><g transform="translate(235,207.5) rotate(-5)"><rect x="-4.5" y="-5" width="9" height="10" fill="none" stroke="#2bb0a2" stroke-width="1"/><path d="M-4.5 0h9M-2 -5v10M2 -5v10" stroke="#2bb0a2" stroke-width="0.7"/></g><g transform="translate(247.5,215) rotate(-20)"><rect x="-4.5" y="-5" width="9" height="10" fill="none" stroke="#2bb0a2" stroke-width="1"/><path d="M-4.5 0h9M-2 -5v10M2 -5v10" stroke="#2bb0a2" stroke-width="0.7"/></g><g transform="translate(265,200) rotate(29)"><rect x="-4.5" y="-5" width="9" height="10" fill="none" stroke="#2bb0a2" stroke-width="1"/><path d="M-4.5 0h9M-2 -5v10M2 -5v10" stroke="#2bb0a2" stroke-width="0.7"/></g><g transform="translate(280,202.5) rotate(20)"><rect x="-4.5" y="-5" width="9" height="10" fill="none" stroke="#2bb0a2" stroke-width="1"/><path d="M-4.5 0h9M-2 -5v10M2 -5v10" stroke="#2bb0a2" stroke-width="0.7"/></g><g transform="translate(192.5,155) rotate(-26)"><rect x="-4.5" y="-5" width="9" height="10" fill="none" stroke="#2bb0a2" stroke-width="1"/><path d="M-4.5 0h9M-2 -5v10M2 -5v10" stroke="#2bb0a2" stroke-width="0.7"/></g><g transform="translate(170,167.5) rotate(7)"><rect x="-4.5" y="-5" width="9" height="10" fill="none" stroke="#2bb0a2" stroke-width="1"/><path d="M-4.5 0h9M-2 -5v10M2 -5v10" stroke="#2bb0a2" stroke-width="0.7"/></g><g transform="translate(177.5,195) rotate(3)"><rect x="-4.5" y="-5" width="9" height="10" fill="none" stroke="#2bb0a2" stroke-width="1"/><path d="M-4.5 0h9M-2 -5v10M2 -5v10" stroke="#2bb0a2" stroke-width="0.7"/></g><g transform="translate(180,205) rotate(38)"><rect x="-4.5" y="-5" width="9" height="10" fill="none" stroke="#2bb0a2" stroke-width="1"/><path d="M-4.5 0h9M-2 -5v10M2 -5v10" stroke="#2bb0a2" stroke-width="0.7"/></g><g transform="translate(190,225) rotate(23)"><rect x="-4.5" y="-5" width="9" height="10" fill="none" stroke="#2bb0a2" stroke-width="1"/><path d="M-4.5 0h9M-2 -5v10M2 -5v10" stroke="#2bb0a2" stroke-width="0.7"/></g><g transform="translate(200,120) rotate(-21)"><rect x="-4.5" y="-5" width="9" height="10" fill="none" stroke="#2bb0a2" stroke-width="1"/><path d="M-4.5 0h9M-2 -5v10M2 -5v10" stroke="#2bb0a2" stroke-width="0.7"/></g><g transform="translate(245,150) rotate(48)"><rect x="-4.5" y="-5" width="9" height="10" fill="none" stroke="#2bb0a2" stroke-width="1"/><path d="M-4.5 0h9M-2 -5v10M2 -5v10" stroke="#2bb0a2" stroke-width="0.7"/></g><g transform="translate(228,95) rotate(-38)"><rect x="-4.5" y="-5" width="9" height="10" fill="none" stroke="#2bb0a2" stroke-width="1"/><path d="M-4.5 0h9M-2 -5v10M2 -5v10" stroke="#2bb0a2" stroke-width="0.7"/></g><g transform="translate(168,110) rotate(-8)"><rect x="-4.5" y="-5" width="9" height="10" fill="none" stroke="#2bb0a2" stroke-width="1"/><path d="M-4.5 0h9M-2 -5v10M2 -5v10" stroke="#2bb0a2" stroke-width="0.7"/></g><g transform="translate(205,200) rotate(26)"><rect x="-4.5" y="-5" width="9" height="10" fill="none" stroke="#2bb0a2" stroke-width="1"/><path d="M-4.5 0h9M-2 -5v10M2 -5v10" stroke="#2bb0a2" stroke-width="0.7"/></g></svg>
<svg class="a" style="left:0px;top:0px;" width="200" height="620" viewBox="0 0 200 620"><g fill="none" stroke="#ebebeb" stroke-width="1.4"><path d="M60.5 588.5 L60.5 538.2 L54.4 538.2 L72.7 519.8 L91.8 538.2 L85 538.2 L85 565 L111 565 L111 558 L130 576.3 L111 594.7 L111 588.5Z"/><path d="M66 540 L72.5 546 L79 540 M72.5 546 V551 M98 570 L110 583 M110 570 L98 583" stroke-width="1.1"/></g></svg>
<svg class="a" style="left:393px;top:101px;" width="11" height="15" viewBox="0 0 11 15"><path d="M1 1 L1 12 L3.8 9.5 L6 14 L7.8 13.2 L5.6 8.8 L9.5 8.8Z" fill="#fff" stroke="#222" stroke-width="0.9"/></svg>
<div class="a" style="left:793px;top:123px;width:449px;height:515px;box-shadow:0 0 6px rgba(0,0,0,0.18)"></div>
<div class="a" style="left:795px;top:125px;width:445px;height:511px;background:#fff;border:1px solid #a9a9a9"></div>
<svg class="a" style="left:802px;top:130px;" width="11" height="11" viewBox="0 0 11 11"><rect x="4" y="0.5" width="4" height="4" fill="#30a040"/><rect x="0.5" y="4" width="4.5" height="5" fill="#c02020"/><rect x="5" y="4.5" width="5" height="5" fill="#2060c0"/><rect x="2" y="6" width="5" height="4" fill="#d03030"/><rect x="6" y="4" width="4" height="5" fill="#40b040"/></svg>
<div class="t" style="left:816.0px;top:132px;font-size:8.28px;line-height:8.28px;color:#8a8a8a;transform:scaleX(0.9302);transform-origin:0 0;">3D Visualization</div>
<div class="a" style="left:1158px;top:135px;width:9px;height:1px;background:#888"></div>
<div class="a" style="left:1188px;top:131px;width:9px;height:9px;border:1px solid #888"></div>
<svg class="a" style="left:1218px;top:131px;" width="10" height="10" viewBox="0 0 10 10"><path d="M0.5 0.5L9.5 9.5M9.5 0.5L0.5 9.5" stroke="#888" stroke-width="1"/></svg>
<div class="a" style="left:796px;top:146px;width:443px;height:14px;background:linear-gradient(#e6e8eb,#dde1e6)"></div>
<svg class="a" style="left:817.5px;top:147.8px;" width="11" height="11" viewBox="0 0 11 11"><path d="M1.5 0.5h5l2.5 2.5v7.5h-7.5z" fill="#fff" stroke="#555" stroke-width="0.8"/><circle cx="5" cy="6" r="2.2" fill="none" stroke="#333"/><path d="M6.5 7.5l3 3" stroke="#3a8a3a" stroke-width="1.4"/></svg>
<svg class="a" style="left:833.1px;top:147.8px;" width="11" height="11" viewBox="0 0 11 11"><rect x="2.5" y="0.5" width="6" height="3.5" fill="#fff" stroke="#555" stroke-width="0.7"/><rect x="0.5" y="3.5" width="10" height="5" rx="1" fill="#777"/><rect x="2.5" y="7" width="6" height="3.5" fill="#fff" stroke="#555" stroke-width="0.7"/></svg>
<div class="a" style="left:848px;top:147px;width:1px;height:12px;background:#c8cdd3"></div>
<svg class="a" style="left:852.1px;top:147.8px;" width="11" height="11" viewBox="0 0 11 11"><rect x="0.5" y="1" width="6" height="6" fill="#e0e8f4" stroke="#7080b0" stroke-width="0.7"/><rect x="4" y="4" width="6.5" height="6" fill="#c8d4ec" stroke="#7080b0" stroke-width="0.7"/></svg>
<div class="a" style="left:867px;top:147px;width:1px;height:12px;background:#c8cdd3"></div>
<svg class="a" style="left:872.1px;top:147.8px;" width="11" height="11" viewBox="0 0 11 11"><circle cx="5.5" cy="5.5" r="5" fill="#1ea0a8"/><circle cx="5.5" cy="5.5" r="2" fill="#8ae0e0"/></svg>
<div class="a" style="left:886px;top:147px;width:1px;height:12px;background:#c8cdd3"></div>
<svg class="a" style="left:890.8px;top:147.8px;" width="11" height="11" viewBox="0 0 11 11"><path d="M2 0.5 L9 6.5 L5.5 7 L7.5 10.5 L6 11 L4 7.5 L2 9.5Z" fill="#555a70"/></svg>
<svg class="a" style="left:906.2px;top:147.8px;" width="11" height="11" viewBox="0 0 11 11"><rect x="0.5" y="4" width="10" height="6" fill="#d8dce2" stroke="#c0c4ca" stroke-width="0.6"/><circle cx="5" cy="3" r="1.5" fill="#b8bcc2"/></svg>
<svg class="a" style="left:926.5px;top:147.8px;" width="11" height="11" viewBox="0 0 11 11"><path d="M3 4h5M3 6l2.5 3 2.5-3z" stroke="#333" fill="#333" stroke-width="0.8"/></svg>
<div class="a" style="left:796px;top:160px;width:443px;height:18px;background:linear-gradient(#cde0f6,#c0d8f4)"></div>
<div class="a" style="left:800px;top:162px;width:32px;height:17px;background:linear-gradient(#f3f6fa,#e7eef6);border:1px solid #b9cbe0;border-bottom:none;border-radius:3px 3px 0 0"></div>
<div class="t" style="left:807.4px;top:166px;font-size:8.60px;line-height:8.60px;color:#333;transform:scaleX(0.9302);transform-origin:0 0;">View</div>
<div class="t" style="left:843.5px;top:166px;font-size:8.60px;line-height:8.60px;color:#3e5a85;transform:scaleX(0.9302);transform-origin:0 0;">Background</div>
<div class="t" style="left:905.4px;top:166px;font-size:8.60px;line-height:8.60px;color:#3e5a85;transform:scaleX(0.9302);transform-origin:0 0;">Display Settings</div>
<div class="a" style="left:796px;top:178px;width:443px;height:62px;background:linear-gradient(#e1eaf5,#d7e2ef)"></div>
<div class="a" style="left:796px;top:240px;width:443px;height:1px;background:#b8c6d6"></div>
<div class="a" style="left:798.5px;top:180.5px;width:166.5px;height:58.5px;border:1px solid #c5d3e3;border-radius:3px;background:linear-gradient(#e9f0f8,#e3ebf5 45%,#d9e4f0)"></div>
<div class="a" style="left:799.5px;top:228px;width:164.5px;height:10px;background:linear-gradient(#cbdcee,#c6d8ec)"></div>
<div class="t" style="left:781.8px;width:200px;text-align:center;top:229px;font-size:8.60px;line-height:8.60px;color:#5b7aa3;transform:scaleX(0.9302);transform-origin:50% 0;">Camera</div>
<div class="a" style="left:967.5px;top:180.5px;width:33.0px;height:58.5px;border:1px solid #c5d3e3;border-radius:3px;background:linear-gradient(#e9f0f8,#e3ebf5 45%,#d9e4f0)"></div>
<div class="a" style="left:968.5px;top:228px;width:31.0px;height:10px;background:linear-gradient(#cbdcee,#c6d8ec)"></div>
<div class="t" style="left:884.0px;width:200px;text-align:center;top:229px;font-size:8.60px;line-height:8.60px;color:#5b7aa3;transform:scaleX(0.9302);transform-origin:50% 0;">Refresh</div>
<div class="a" style="left:1003px;top:180.5px;width:93.5px;height:58.5px;border:1px solid #c5d3e3;border-radius:3px;background:linear-gradient(#e9f0f8,#e3ebf5 45%,#d9e4f0)"></div>
<div class="a" style="left:1004px;top:228px;width:91.5px;height:10px;background:linear-gradient(#cbdcee,#c6d8ec)"></div>
<div class="t" style="left:949.8px;width:200px;text-align:center;top:229px;font-size:8.60px;line-height:8.60px;color:#5b7aa3;transform:scaleX(0.9302);transform-origin:50% 0;">Animation</div>
<div class="a" style="left:1098.5px;top:180.5px;width:31px;height:58.5px;border:1px solid #c5d3e3;border-radius:3px;background:linear-gradient(#e6eef8,#dbe6f2 40%,#e4f2fa)"></div>
<div class="a" style="left:1131.5px;top:180.5px;width:27.5px;height:58.5px;border:1px solid #c5d3e3;border-radius:3px;background:linear-gradient(#e6eef8,#dbe6f2 40%,#e4f2fa)"></div>
<div class="a" style="left:1161px;top:180.5px;width:37.5px;height:58.5px;border:1px solid #c5d3e3;border-radius:3px;background:linear-gradient(#e6eef8,#dbe6f2 40%,#e4f2fa)"></div>
<div class="t" style="left:1014.0px;width:200px;text-align:center;top:210px;font-size:8.60px;line-height:8.60px;color:#3a4565;transform:scaleX(0.9302);transform-origin:50% 0;">Options</div>
<div class="t" style="left:1045.2px;width:200px;text-align:center;top:210px;font-size:8.60px;line-height:8.60px;color:#3a4565;transform:scaleX(0.9302);transform-origin:50% 0;">View</div>
<div class="t" style="left:1079.7px;width:200px;text-align:center;top:210px;font-size:8.60px;line-height:8.60px;color:#3a4565;transform:scaleX(0.9302);transform-origin:50% 0;">Viewports</div>
<svg class="a" style="left:1112px;top:223.5px;" width="4" height="2.5" viewBox="0 0 4 2.5"><path d="M0 0h4L2 2.5Z" fill="#555"/></svg>
<svg class="a" style="left:1143.2px;top:223.5px;" width="4" height="2.5" viewBox="0 0 4 2.5"><path d="M0 0h4L2 2.5Z" fill="#555"/></svg>
<svg class="a" style="left:1177.7px;top:223.5px;" width="4" height="2.5" viewBox="0 0 4 2.5"><path d="M0 0h4L2 2.5Z" fill="#555"/></svg>
<div class="a" style="left:802.5px;top:182px;width:79px;height:14px;background:#f8fafc;border:1px solid #d6dde6"></div>
<div class="t" style="left:804.5px;top:185px;font-size:8.60px;line-height:8.60px;color:#222;transform:scaleX(0.9302);transform-origin:0 0;">Camera</div>
<svg class="a" style="left:875px;top:188px;" width="5" height="3" viewBox="0 0 5 3"><path d="M0 0h5L2.5 3Z" fill="#666"/></svg>
<svg class="a" style="left:803px;top:198px;" width="13" height="12" viewBox="0 0 13 12"><rect x="0.5" y="0.5" width="9" height="8" rx="1" fill="#1f9080"/><rect x="2" y="2.5" width="4" height="3" fill="#0a5a50"/><rect x="7" y="6" width="5" height="5" fill="#fff" stroke="#334" stroke-width="0.8"/></svg>
<div class="t" style="left:816.8px;top:200px;font-size:8.60px;line-height:8.60px;color:#3a4565;transform:scaleX(0.9302);transform-origin:0 0;">Save camera</div>
<svg class="a" style="left:803px;top:212px;" width="13" height="12" viewBox="0 0 13 12"><rect x="0.5" y="0.5" width="9" height="8" rx="1" fill="#b0b6bf"/><path d="M7 6l5 5M12 6l-5 5" stroke="#a0a6b0" stroke-width="1"/></svg>
<div class="t" style="left:816.8px;top:214px;font-size:8.60px;line-height:8.60px;color:#a3abb8;transform:scaleX(0.9302);transform-origin:0 0;">Delete camera</div>
<svg class="a" style="left:884px;top:184px;" width="11" height="10" viewBox="0 0 11 10"><rect x="0.5" y="0.5" width="9" height="8" rx="1" fill="#c0c6cf"/></svg>
<svg class="a" style="left:884px;top:199px;" width="12" height="11" viewBox="0 0 12 11"><rect x="0.5" y="0.5" width="9" height="8" rx="1" fill="#1f9080"/><path d="M4 8 Q6 5 11 7 L11 10 H4Z" fill="#c01818"/></svg>
<svg class="a" style="left:884px;top:214px;" width="11" height="10" viewBox="0 0 11 10"><rect x="0.5" y="0.5" width="10" height="9" rx="1" fill="#1f9080"/><rect x="3" y="3" width="5" height="4" fill="#0a3a30"/></svg>
<svg class="a" style="left:899px;top:183px;" width="12" height="11" viewBox="0 0 12 11"><path d="M1 3h4l1-2h4v3" fill="none" stroke="#333" stroke-width="0.8"/><rect x="2" y="4" width="9" height="6.5" rx="1" fill="#1f9080"/></svg>
<div class="t" style="left:912.0px;top:184px;font-size:8.60px;line-height:8.60px;color:#3a4565;transform:scaleX(0.9302);transform-origin:0 0;">Camera flight</div>
<svg class="a" style="left:975px;top:182px;" width="18" height="21" viewBox="0 0 18 21"><path d="M9 0v2.5M1 7l2.5 1.2M17 7l-2.5 1.2M2 16l2.5-1.2M16 16l-2.5-1.2M9 21v-2.5" stroke="#e8b070" stroke-width="0.9"/><path d="M9 2.5 Q14.5 8 13 13 L11 17.5 H7 L5 13 Q3.5 8 9 2.5Z" fill="#f7c531"/><path d="M9 5v12M9 11l-2.5-3M9 11l2.5-3" stroke="#e38a1c" stroke-width="1.2" fill="none"/></svg>
<div class="t" style="left:884.0px;width:200px;text-align:center;top:208px;font-size:8.60px;line-height:8.60px;color:#3a4565;transform:scaleX(0.9302);transform-origin:50% 0;">Light</div>
<div class="t" style="left:884.0px;width:200px;text-align:center;top:217px;font-size:8.60px;line-height:8.60px;color:#3a4565;transform:scaleX(0.9302);transform-origin:50% 0;">Source</div>
<svg class="a" style="left:1006px;top:182px;" width="13" height="12" viewBox="0 0 13 12"><path d="M6 1 Q11 1 11 6 Q11 11 6 11 Q1 11 1 6 Q1 1 6 1Z" fill="none" stroke="#555" stroke-width="0.9"/><circle cx="4.5" cy="5" r="1" fill="#555"/><circle cx="7.5" cy="5" r="1" fill="#555"/><path d="M3.5 8 Q6 10 8.5 8" fill="none" stroke="#555" stroke-width="0.8"/></svg>
<div class="t" style="left:1020.3px;top:184px;font-size:8.60px;line-height:8.60px;color:#3a4565;transform:scaleX(0.9302);transform-origin:0 0;">Render animation</div>
<svg class="a" style="left:1087px;top:187.5px;" width="4" height="2.5" viewBox="0 0 4 2.5"><path d="M0 0h4L2 2.5Z" fill="#555"/></svg>
<svg class="a" style="left:1010px;top:198.5px;" width="6" height="8" viewBox="0 0 6 8"><path d="M0.5 0.5 L5.5 4 L0.5 7.5Z" fill="#2a4aa8"/></svg>
<div class="t" style="left:1020.3px;top:198px;font-size:8.60px;line-height:8.60px;color:#3a4565;transform:scaleX(0.9302);transform-origin:0 0;">Onscreen animation</div>
<div class="a" style="left:1005.5px;top:210px;width:39px;height:14px;background:#f8fafc;border:1px solid #d6dde6"></div>
<div class="t" style="left:1008.0px;top:213px;font-size:8.60px;line-height:8.60px;color:#222;transform:scaleX(0.9302);transform-origin:0 0;">1:1</div>
<svg class="a" style="left:1038px;top:216px;" width="5" height="3" viewBox="0 0 5 3"><path d="M0 0h5L2.5 3Z" fill="#666"/></svg>
<svg class="a" style="left:796px;top:241px;overflow:hidden" width="443" height="393" viewBox="0 0 443 393"><defs><pattern id="brk" width="12" height="9" patternUnits="userSpaceOnUse" patternTransform="rotate(-8)">
<rect width="12" height="9" fill="#18524a"/><rect x="0" y="0" width="6" height="4.5" fill="#1c5d54"/><rect x="6" y="4.5" width="6" height="4.5" fill="#154b43"/></pattern>
<linearGradient id="glass" x1="0" y1="0" x2="0" y2="1"><stop offset="0" stop-color="#3a3a3a"/><stop offset="1" stop-color="#7a7a7a"/></linearGradient></defs>
<g transform="translate(-796,-241)">
<path d="M834 373 L842 344 Q860 336 891 333 Q930 318 975 304 Q1020 300 1060 311 L1127 339 Q1200 344 1239 356 L1239 440 L1175 450 L1100 440 L1060 432 L900 426 L869 414 Q842 406 836 396Z" fill="#0d0d0d"/>
<path d="M898 350 Q902 330 935 322 L1058 316 Q1070 330 1072 360 L1072 428 L906 426 Q895 400 898 350Z" fill="#e6e6e6"/>
<path d="M913 336 Q945 321 990 318 L1058 318 L1071 352 L917 353Z" fill="url(#glass)"/>
<path d="M930 340 L960 330 L1000 328 L1040 330 L1050 345 L935 348Z" fill="#9a9a9a" opacity="0.6"/>
<path d="M1060 312 L1127 339 L1120 344 L1066 336Z" fill="#b4b4b4"/>
<path d="M1072 360 L1072 428 L1100 440 L1110 410 Q1136 380 1165 395 L1175 448 L1239 440 L1239 356 Q1200 345 1127 340Z" fill="#0a0a0a"/>
<circle cx="889" cy="411" r="21" fill="#151515"/><circle cx="889" cy="411" r="15.5" fill="#a4a4a4"/><circle cx="889" cy="411" r="4.5" fill="#666"/>
<path d="M889 397 L890 407 M876 406 L885 410 M880 422 L887 414 M898 422 L891 414 M902 406 L893 410" stroke="#666" stroke-width="2.5"/>
<circle cx="1136.5" cy="448" r="32" fill="#111"/><circle cx="1136.5" cy="448" r="23" fill="#a8a8a8"/><circle cx="1136.5" cy="448" r="7" fill="#666"/>
<path d="M1136.5 426 L1138 441 M1115 442 L1130 446 M1122 466 L1133 454 M1151 466 L1140 454 M1158 442 L1143 446" stroke="#6a6a6a" stroke-width="3.5"/>
<rect x="835.5" y="380" width="23.5" height="14.5" fill="#d8d8d8"/><text x="837" y="392.5" font-size="12" font-family="Liberation Sans" font-weight="bold" fill="#222" textLength="20" lengthAdjust="spacingAndGlyphs">911</text>
<rect x="839" y="347" width="5" height="22" fill="#5a0a10"/>
<text x="1075" y="377.5" font-size="9" font-family="Liberation Sans" font-weight="bold" fill="#f0f0f0" textLength="22" lengthAdjust="spacingAndGlyphs">0926</text>
<path d="M1038 372 h27 v24 l-13.5 11 l-13.5 -11Z" fill="#ebe3e6" stroke="#8a8a8a"/><rect x="1041" y="374" width="21" height="5" fill="#333"/><path d="M1044 383 Q1051 379 1059 383 Q1057 394 1051.5 399 Q1046 394 1044 383Z" fill="#c05068"/>
<path d="M1012 368 h20 v23 h-20z" fill="#d8d8d8"/><path d="M1014 372h16M1014 378h16M1014 384h16" stroke="#7a1a2a" stroke-width="2.5"/>
<path d="M1181 386 Q1200 382 1217 385 L1216 400 Q1198 403 1183 401Z" fill="#b8ad90"/>
<path d="M1231 396 h8 v34 h-8z" fill="#dcdcdc"/>
<path d="M975.8 281 V302" stroke="#777" stroke-width="0.8" stroke-dasharray="1.5 1.5"/>
<rect x="970" y="302" width="14" height="4" fill="#222"/>
<path d="M923 341 L993 327 L1012.7 356.6 L1017 452 L934 512 L909 490 L906 415 L915.5 356.6Z" fill="url(#brk)"/>
<path d="M930 502 L1040 442 L1047 452 L936 514Z" fill="#1a5a50"/><path d="M930 502 L1040 442 L1042 447 L932 507Z" fill="#2c8d7d"/><rect x="916" y="343.5" width="12" height="9" fill="#258575"/><rect x="916" y="349.5" width="12" height="3" fill="#15483f"/><rect x="916" y="343.5" width="12" height="2" fill="#33a08e"/><rect x="910" y="357.5" width="12" height="9" fill="#258575"/><rect x="910" y="363.5" width="12" height="3" fill="#15483f"/><rect x="910" y="357.5" width="12" height="2" fill="#33a08e"/><rect x="913" y="373.5" width="12" height="9" fill="#258575"/><rect x="913" y="379.5" width="12" height="3" fill="#15483f"/><rect x="913" y="373.5" width="12" height="2" fill="#33a08e"/><rect x="906" y="389.5" width="12" height="9" fill="#258575"/><rect x="906" y="395.5" width="12" height="3" fill="#15483f"/><rect x="906" y="389.5" width="12" height="2" fill="#33a08e"/><rect x="909" y="405.5" width="12" height="9" fill="#258575"/><rect x="909" y="411.5" width="12" height="3" fill="#15483f"/><rect x="909" y="405.5" width="12" height="2" fill="#33a08e"/><rect x="902" y="421.5" width="12" height="9" fill="#258575"/><rect x="902" y="427.5" width="12" height="3" fill="#15483f"/><rect x="902" y="421.5" width="12" height="2" fill="#33a08e"/><rect x="906" y="437.5" width="12" height="9" fill="#258575"/><rect x="906" y="443.5" width="12" height="3" fill="#15483f"/><rect x="906" y="437.5" width="12" height="2" fill="#33a08e"/><rect x="901" y="453.5" width="12" height="9" fill="#258575"/><rect x="901" y="459.5" width="12" height="3" fill="#15483f"/><rect x="901" y="453.5" width="12" height="2" fill="#33a08e"/><rect x="905" y="469.5" width="12" height="9" fill="#258575"/><rect x="905" y="475.5" width="12" height="3" fill="#15483f"/><rect x="905" y="469.5" width="12" height="2" fill="#33a08e"/><rect x="904" y="485.5" width="12" height="9" fill="#258575"/><rect x="904" y="491.5" width="12" height="3" fill="#15483f"/><rect x="904" y="485.5" width="12" height="2" fill="#33a08e"/><rect x="916" y="495.5" width="12" height="9" fill="#258575"/><rect x="916" y="501.5" width="12" height="3" fill="#15483f"/><rect x="916" y="495.5" width="12" height="2" fill="#33a08e"/><rect x="1000" y="335.5" width="12" height="9" fill="#258575"/><rect x="1000" y="341.5" width="12" height="3" fill="#15483f"/><rect x="1000" y="335.5" width="12" height="2" fill="#33a08e"/><rect x="1004" y="357.5" width="12" height="9" fill="#258575"/><rect x="1004" y="363.5" width="12" height="3" fill="#15483f"/><rect x="1004" y="357.5" width="12" height="2" fill="#33a08e"/><rect x="1008" y="377.5" width="12" height="9" fill="#258575"/><rect x="1008" y="383.5" width="12" height="3" fill="#15483f"/><rect x="1008" y="377.5" width="12" height="2" fill="#33a08e"/><rect x="1012" y="393.5" width="12" height="9" fill="#258575"/><rect x="1012" y="399.5" width="12" height="3" fill="#15483f"/><rect x="1012" y="393.5" width="12" height="2" fill="#33a08e"/><rect x="1006" y="411.5" width="12" height="9" fill="#258575"/><rect x="1006" y="417.5" width="12" height="3" fill="#15483f"/><rect x="1006" y="411.5" width="12" height="2" fill="#33a08e"/><rect x="1010" y="429.5" width="12" height="9" fill="#258575"/><rect x="1010" y="435.5" width="12" height="3" fill="#15483f"/><rect x="1010" y="429.5" width="12" height="2" fill="#33a08e"/><rect x="1006" y="443.5" width="12" height="9" fill="#258575"/><rect x="1006" y="449.5" width="12" height="3" fill="#15483f"/><rect x="1006" y="443.5" width="12" height="2" fill="#33a08e"/><g transform="translate(997,294) rotate(9)"><rect x="-11" y="-7" width="22" height="14" fill="#26917f"/><rect x="-11" y="2.5" width="22" height="4.5" fill="#135046"/><rect x="-11" y="-7" width="22" height="3.5" fill="#45b5a3"/><rect x="7" y="-7" width="4" height="14" fill="#1d7264"/></g><g transform="translate(1005,283) rotate(17)"><rect x="-11" y="-7" width="22" height="14" fill="#26917f"/><rect x="-11" y="2.5" width="22" height="4.5" fill="#135046"/><rect x="-11" y="-7" width="22" height="3.5" fill="#45b5a3"/><rect x="7" y="-7" width="4" height="14" fill="#1d7264"/></g><g transform="translate(1016.5,275) rotate(21)"><rect x="-11" y="-7" width="22" height="14" fill="#26917f"/><rect x="-11" y="2.5" width="22" height="4.5" fill="#135046"/><rect x="-11" y="-7" width="22" height="3.5" fill="#45b5a3"/><rect x="7" y="-7" width="4" height="14" fill="#1d7264"/></g><g transform="translate(1032,267) rotate(31)"><rect x="-11" y="-7" width="22" height="14" fill="#26917f"/><rect x="-11" y="2.5" width="22" height="4.5" fill="#135046"/><rect x="-11" y="-7" width="22" height="3.5" fill="#45b5a3"/><rect x="7" y="-7" width="4" height="14" fill="#1d7264"/></g><g transform="translate(1047.6,261) rotate(17)"><rect x="-11" y="-7" width="22" height="14" fill="#26917f"/><rect x="-11" y="2.5" width="22" height="4.5" fill="#135046"/><rect x="-11" y="-7" width="22" height="3.5" fill="#45b5a3"/><rect x="7" y="-7" width="4" height="14" fill="#1d7264"/></g><g transform="translate(1063,257.5) rotate(30)"><rect x="-11" y="-7" width="22" height="14" fill="#26917f"/><rect x="-11" y="2.5" width="22" height="4.5" fill="#135046"/><rect x="-11" y="-7" width="22" height="3.5" fill="#45b5a3"/><rect x="7" y="-7" width="4" height="14" fill="#1d7264"/></g><g transform="translate(1078.7,253.6) rotate(-33)"><rect x="-11" y="-7" width="22" height="14" fill="#26917f"/><rect x="-11" y="2.5" width="22" height="4.5" fill="#135046"/><rect x="-11" y="-7" width="22" height="3.5" fill="#45b5a3"/><rect x="7" y="-7" width="4" height="14" fill="#1d7264"/></g><g transform="translate(1086.5,263) rotate(-2)"><rect x="-11" y="-7" width="22" height="14" fill="#26917f"/><rect x="-11" y="2.5" width="22" height="4.5" fill="#135046"/><rect x="-11" y="-7" width="22" height="3.5" fill="#45b5a3"/><rect x="7" y="-7" width="4" height="14" fill="#1d7264"/></g><g transform="translate(1071,275) rotate(31)"><rect x="-11" y="-7" width="22" height="14" fill="#26917f"/><rect x="-11" y="2.5" width="22" height="4.5" fill="#135046"/><rect x="-11" y="-7" width="22" height="3.5" fill="#45b5a3"/><rect x="7" y="-7" width="4" height="14" fill="#1d7264"/></g><g transform="translate(1055,286.6) rotate(10)"><rect x="-11" y="-7" width="22" height="14" fill="#26917f"/><rect x="-11" y="2.5" width="22" height="4.5" fill="#135046"/><rect x="-11" y="-7" width="22" height="3.5" fill="#45b5a3"/><rect x="7" y="-7" width="4" height="14" fill="#1d7264"/></g><g transform="translate(1040,298) rotate(28)"><rect x="-11" y="-7" width="22" height="14" fill="#26917f"/><rect x="-11" y="2.5" width="22" height="4.5" fill="#135046"/><rect x="-11" y="-7" width="22" height="3.5" fill="#45b5a3"/><rect x="7" y="-7" width="4" height="14" fill="#1d7264"/></g><g transform="translate(1024,310) rotate(-27)"><rect x="-11" y="-7" width="22" height="14" fill="#26917f"/><rect x="-11" y="2.5" width="22" height="4.5" fill="#135046"/><rect x="-11" y="-7" width="22" height="3.5" fill="#45b5a3"/><rect x="7" y="-7" width="4" height="14" fill="#1d7264"/></g><g transform="translate(1009,323.5) rotate(-2)"><rect x="-11" y="-7" width="22" height="14" fill="#26917f"/><rect x="-11" y="2.5" width="22" height="4.5" fill="#135046"/><rect x="-11" y="-7" width="22" height="3.5" fill="#45b5a3"/><rect x="7" y="-7" width="4" height="14" fill="#1d7264"/></g><g transform="translate(1036,325.5) rotate(-18)"><rect x="-11" y="-7" width="22" height="14" fill="#26917f"/><rect x="-11" y="2.5" width="22" height="4.5" fill="#135046"/><rect x="-11" y="-7" width="22" height="3.5" fill="#45b5a3"/><rect x="7" y="-7" width="4" height="14" fill="#1d7264"/></g><g transform="translate(1055,310) rotate(3)"><rect x="-11" y="-7" width="22" height="14" fill="#26917f"/><rect x="-11" y="2.5" width="22" height="4.5" fill="#135046"/><rect x="-11" y="-7" width="22" height="3.5" fill="#45b5a3"/><rect x="7" y="-7" width="4" height="14" fill="#1d7264"/></g><g transform="translate(1075,298) rotate(5)"><rect x="-11" y="-7" width="22" height="14" fill="#26917f"/><rect x="-11" y="2.5" width="22" height="4.5" fill="#135046"/><rect x="-11" y="-7" width="22" height="3.5" fill="#45b5a3"/><rect x="7" y="-7" width="4" height="14" fill="#1d7264"/></g><g transform="translate(1055,341) rotate(-34)"><rect x="-11" y="-7" width="22" height="14" fill="#26917f"/><rect x="-11" y="2.5" width="22" height="4.5" fill="#135046"/><rect x="-11" y="-7" width="22" height="3.5" fill="#45b5a3"/><rect x="7" y="-7" width="4" height="14" fill="#1d7264"/></g><g transform="translate(1063,329) rotate(-20)"><rect x="-11" y="-7" width="22" height="14" fill="#26917f"/><rect x="-11" y="2.5" width="22" height="4.5" fill="#135046"/><rect x="-11" y="-7" width="22" height="3.5" fill="#45b5a3"/><rect x="7" y="-7" width="4" height="14" fill="#1d7264"/></g><g transform="translate(1098,271) rotate(-15)"><rect x="-11" y="-7" width="22" height="14" fill="#26917f"/><rect x="-11" y="2.5" width="22" height="4.5" fill="#135046"/><rect x="-11" y="-7" width="22" height="3.5" fill="#45b5a3"/><rect x="7" y="-7" width="4" height="14" fill="#1d7264"/></g><g transform="translate(1117,298) rotate(29)"><rect x="-11" y="-7" width="22" height="14" fill="#26917f"/><rect x="-11" y="2.5" width="22" height="4.5" fill="#135046"/><rect x="-11" y="-7" width="22" height="3.5" fill="#45b5a3"/><rect x="7" y="-7" width="4" height="14" fill="#1d7264"/></g><g transform="translate(1137,310) rotate(19)"><rect x="-11" y="-7" width="22" height="14" fill="#26917f"/><rect x="-11" y="2.5" width="22" height="4.5" fill="#135046"/><rect x="-11" y="-7" width="22" height="3.5" fill="#45b5a3"/><rect x="7" y="-7" width="4" height="14" fill="#1d7264"/></g><g transform="translate(1148,300) rotate(-24)"><rect x="-11" y="-7" width="22" height="14" fill="#26917f"/><rect x="-11" y="2.5" width="22" height="4.5" fill="#135046"/><rect x="-11" y="-7" width="22" height="3.5" fill="#45b5a3"/><rect x="7" y="-7" width="4" height="14" fill="#1d7264"/></g><g transform="translate(1105.6,317.8) rotate(21)"><rect x="-11" y="-7" width="22" height="14" fill="#26917f"/><rect x="-11" y="2.5" width="22" height="4.5" fill="#135046"/><rect x="-11" y="-7" width="22" height="3.5" fill="#45b5a3"/><rect x="7" y="-7" width="4" height="14" fill="#1d7264"/></g><g transform="translate(1168,306) rotate(-25)"><rect x="-11" y="-7" width="22" height="14" fill="#26917f"/><rect x="-11" y="2.5" width="22" height="4.5" fill="#135046"/><rect x="-11" y="-7" width="22" height="3.5" fill="#45b5a3"/><rect x="7" y="-7" width="4" height="14" fill="#1d7264"/></g><g transform="translate(1187,302) rotate(8)"><rect x="-11" y="-7" width="22" height="14" fill="#26917f"/><rect x="-11" y="2.5" width="22" height="4.5" fill="#135046"/><rect x="-11" y="-7" width="22" height="3.5" fill="#45b5a3"/><rect x="7" y="-7" width="4" height="14" fill="#1d7264"/></g><g transform="translate(1203,310) rotate(-26)"><rect x="-11" y="-7" width="22" height="14" fill="#26917f"/><rect x="-11" y="2.5" width="22" height="4.5" fill="#135046"/><rect x="-11" y="-7" width="22" height="3.5" fill="#45b5a3"/><rect x="7" y="-7" width="4" height="14" fill="#1d7264"/></g><g transform="translate(1210.6,318) rotate(-35)"><rect x="-11" y="-7" width="22" height="14" fill="#26917f"/><rect x="-11" y="2.5" width="22" height="4.5" fill="#135046"/><rect x="-11" y="-7" width="22" height="3.5" fill="#45b5a3"/><rect x="7" y="-7" width="4" height="14" fill="#1d7264"/></g><g transform="translate(1187,314) rotate(26)"><rect x="-11" y="-7" width="22" height="14" fill="#26917f"/><rect x="-11" y="2.5" width="22" height="4.5" fill="#135046"/><rect x="-11" y="-7" width="22" height="3.5" fill="#45b5a3"/><rect x="7" y="-7" width="4" height="14" fill="#1d7264"/></g><g transform="translate(1175.6,341) rotate(-20)"><rect x="-11" y="-7" width="22" height="14" fill="#26917f"/><rect x="-11" y="2.5" width="22" height="4.5" fill="#135046"/><rect x="-11" y="-7" width="22" height="3.5" fill="#45b5a3"/><rect x="7" y="-7" width="4" height="14" fill="#1d7264"/></g><g transform="translate(1214.6,360.6) rotate(-20)"><rect x="-11" y="-7" width="22" height="14" fill="#26917f"/><rect x="-11" y="2.5" width="22" height="4.5" fill="#135046"/><rect x="-11" y="-7" width="22" height="3.5" fill="#45b5a3"/><rect x="7" y="-7" width="4" height="14" fill="#1d7264"/></g><g transform="translate(1234,349) rotate(34)"><rect x="-11" y="-7" width="22" height="14" fill="#26917f"/><rect x="-11" y="2.5" width="22" height="4.5" fill="#135046"/><rect x="-11" y="-7" width="22" height="3.5" fill="#45b5a3"/><rect x="7" y="-7" width="4" height="14" fill="#1d7264"/></g><g transform="translate(1232,388) rotate(26)"><rect x="-11" y="-7" width="22" height="14" fill="#26917f"/><rect x="-11" y="2.5" width="22" height="4.5" fill="#135046"/><rect x="-11" y="-7" width="22" height="3.5" fill="#45b5a3"/><rect x="7" y="-7" width="4" height="14" fill="#1d7264"/></g><g transform="translate(1129,403) rotate(-15)"><rect x="-11" y="-7" width="22" height="14" fill="#26917f"/><rect x="-11" y="2.5" width="22" height="4.5" fill="#135046"/><rect x="-11" y="-7" width="22" height="3.5" fill="#45b5a3"/><rect x="7" y="-7" width="4" height="14" fill="#1d7264"/></g><g transform="translate(1191,417) rotate(32)"><rect x="-11" y="-7" width="22" height="14" fill="#26917f"/><rect x="-11" y="2.5" width="22" height="4.5" fill="#135046"/><rect x="-11" y="-7" width="22" height="3.5" fill="#45b5a3"/><rect x="7" y="-7" width="4" height="14" fill="#1d7264"/></g><g transform="translate(1094,452) rotate(3)"><rect x="-11" y="-7" width="22" height="14" fill="#26917f"/><rect x="-11" y="2.5" width="22" height="4.5" fill="#135046"/><rect x="-11" y="-7" width="22" height="3.5" fill="#45b5a3"/><rect x="7" y="-7" width="4" height="14" fill="#1d7264"/></g><g transform="translate(1168,469.6) rotate(12)"><rect x="-11" y="-7" width="22" height="14" fill="#26917f"/><rect x="-11" y="2.5" width="22" height="4.5" fill="#135046"/><rect x="-11" y="-7" width="22" height="3.5" fill="#45b5a3"/><rect x="7" y="-7" width="4" height="14" fill="#1d7264"/></g><g transform="translate(1222,465.7) rotate(-21)"><rect x="-11" y="-7" width="22" height="14" fill="#26917f"/><rect x="-11" y="2.5" width="22" height="4.5" fill="#135046"/><rect x="-11" y="-7" width="22" height="3.5" fill="#45b5a3"/><rect x="7" y="-7" width="4" height="14" fill="#1d7264"/></g><g transform="translate(1179.5,446) rotate(31)"><rect x="-11" y="-7" width="22" height="14" fill="#26917f"/><rect x="-11" y="2.5" width="22" height="4.5" fill="#135046"/><rect x="-11" y="-7" width="22" height="3.5" fill="#45b5a3"/><rect x="7" y="-7" width="4" height="14" fill="#1d7264"/></g><g transform="translate(1051,454) rotate(13)"><rect x="-11" y="-7" width="22" height="14" fill="#26917f"/><rect x="-11" y="2.5" width="22" height="4.5" fill="#135046"/><rect x="-11" y="-7" width="22" height="3.5" fill="#45b5a3"/><rect x="7" y="-7" width="4" height="14" fill="#1d7264"/></g><g transform="translate(1055,469.6) rotate(33)"><rect x="-11" y="-7" width="22" height="14" fill="#26917f"/><rect x="-11" y="2.5" width="22" height="4.5" fill="#135046"/><rect x="-11" y="-7" width="22" height="3.5" fill="#45b5a3"/><rect x="7" y="-7" width="4" height="14" fill="#1d7264"/></g><g transform="translate(1028,458) rotate(28)"><rect x="-11" y="-7" width="22" height="14" fill="#26917f"/><rect x="-11" y="2.5" width="22" height="4.5" fill="#135046"/><rect x="-11" y="-7" width="22" height="3.5" fill="#45b5a3"/><rect x="7" y="-7" width="4" height="14" fill="#1d7264"/></g><g transform="translate(1108,286) rotate(-14)"><rect x="-11" y="-7" width="22" height="14" fill="#26917f"/><rect x="-11" y="2.5" width="22" height="4.5" fill="#135046"/><rect x="-11" y="-7" width="22" height="3.5" fill="#45b5a3"/><rect x="7" y="-7" width="4" height="14" fill="#1d7264"/></g><g transform="translate(1125,292) rotate(-10)"><rect x="-11" y="-7" width="22" height="14" fill="#26917f"/><rect x="-11" y="2.5" width="22" height="4.5" fill="#135046"/><rect x="-11" y="-7" width="22" height="3.5" fill="#45b5a3"/><rect x="7" y="-7" width="4" height="14" fill="#1d7264"/></g><g transform="translate(1092,295) rotate(-23)"><rect x="-11" y="-7" width="22" height="14" fill="#26917f"/><rect x="-11" y="2.5" width="22" height="4.5" fill="#135046"/><rect x="-11" y="-7" width="22" height="3.5" fill="#45b5a3"/><rect x="7" y="-7" width="4" height="14" fill="#1d7264"/></g><g transform="translate(1110,330) rotate(-25)"><rect x="-11" y="-7" width="22" height="14" fill="#26917f"/><rect x="-11" y="2.5" width="22" height="4.5" fill="#135046"/><rect x="-11" y="-7" width="22" height="3.5" fill="#45b5a3"/><rect x="7" y="-7" width="4" height="14" fill="#1d7264"/></g><g transform="translate(1090,280) rotate(-30)"><rect x="-11" y="-7" width="22" height="14" fill="#26917f"/><rect x="-11" y="2.5" width="22" height="4.5" fill="#135046"/><rect x="-11" y="-7" width="22" height="3.5" fill="#45b5a3"/><rect x="7" y="-7" width="4" height="14" fill="#1d7264"/></g><g transform="translate(1130,320) rotate(-14)"><rect x="-11" y="-7" width="22" height="14" fill="#26917f"/><rect x="-11" y="2.5" width="22" height="4.5" fill="#135046"/><rect x="-11" y="-7" width="22" height="3.5" fill="#45b5a3"/><rect x="7" y="-7" width="4" height="14" fill="#1d7264"/></g></g></svg>
<svg class="a" style="left:3px;top:663px;" width="4" height="12" viewBox="0 0 4 12"><circle cx="1.8" cy="1.8" r="0.7" fill="#556"/><circle cx="1.8" cy="4.4" r="0.7" fill="#556"/><circle cx="1.8" cy="7.1" r="0.7" fill="#556"/><circle cx="1.8" cy="9.8" r="0.7" fill="#556"/></svg>
<div class="t" style="left:1088.6px;top:682px;font-size:8.17px;line-height:8.17px;color:#333;transform:scaleX(0.9302);transform-origin:0 0;">Scale 1:&nbsp;&nbsp;75</div>
<div class="a" style="left:1130px;top:679px;width:1px;height:13px;background:#aebfd4"></div>
<div class="t" style="left:1133.4px;top:682px;font-size:8.38px;line-height:8.38px;color:#333;transform:scaleX(0.9302);transform-origin:0 0;">&#956;: 0.80</div>
<div class="a" style="left:1160px;top:679px;width:1px;height:13px;background:#aebfd4"></div>
<div class="t" style="left:1162.8px;top:682px;font-size:8.38px;line-height:8.38px;color:#333;transform:scaleX(0.9302);transform-origin:0 0;">Kinetics</div>
<div class="a" style="left:1190px;top:679px;width:1px;height:13px;background:#aebfd4"></div>
<svg class="a" style="left:1193px;top:679px;" width="12" height="12" viewBox="0 0 12 12"><circle cx="6" cy="6" r="5.2" fill="#e8eef6" stroke="#6a7a90" stroke-width="1"/><path d="M3 6h6" stroke="#333" stroke-width="1.4"/></svg>
<div class="a" style="left:1206px;top:685px;width:62px;height:1px;background:#8a98ac"></div>
<svg class="a" style="left:1237px;top:679px;" width="8" height="11" viewBox="0 0 8 11"><path d="M0.5 0.5h7v6l-3.5 3.5-3.5-3.5z" fill="#e8eef6" stroke="#6a7a90" stroke-width="0.9"/></svg>
<svg class="a" style="left:1268px;top:679px;" width="12" height="12" viewBox="0 0 12 12"><circle cx="6" cy="6" r="5.2" fill="#e8eef6" stroke="#6a7a90" stroke-width="1"/><path d="M3 6h6M6 3v6" stroke="#333" stroke-width="1.4"/></svg>
<svg class="a" style="left:1272px;top:672px;" width="6" height="4" viewBox="0 0 6 4"><path d="M0.5 0.5h5M0.5 1.5l2.5 2.5 2.5-2.5z" stroke="#555" fill="#555" stroke-width="0.7"/></svg>
<svg class="a" style="left:6px;top:649px;" width="6" height="9" viewBox="0 0 6 9"><path d="M4.5 1 L1.5 4.5 L4.5 8" fill="none" stroke="#333" stroke-width="1.3"/></svg>
<svg class="a" style="left:1259px;top:649px;" width="6" height="9" viewBox="0 0 6 9"><path d="M1.5 1 L4.5 4.5 L1.5 8" fill="none" stroke="#333" stroke-width="1.3"/></svg>
<svg class="a" style="left:1270px;top:115px;" width="8" height="6" viewBox="0 0 8 6"><path d="M1 4.5 L4 1.5 L7 4.5" fill="none" stroke="#333" stroke-width="1.3"/></svg>
<svg class="a" style="left:1270px;top:639px;" width="8" height="6" viewBox="0 0 8 6"><path d="M1 1.5 L4 4.5 L7 1.5" fill="none" stroke="#333" stroke-width="1.3"/></svg>
<div class="a" style="left:0px;top:693px;width:1280px;height:27px;background:#1f1f22"></div>
<div class="a" style="left:0px;top:693px;width:32px;height:27px;background:#141414"></div>
<svg class="a" style="left:10px;top:700px;" width="12" height="12" viewBox="0 0 12 12"><path d="M0 1.6 L5 0.9 V5.6 H0Z M5.8 0.8 L12 0 V5.6 H5.8Z M0 6.4 H5 V11.1 L0 10.4Z M5.8 6.4 H12 V12 L5.8 11.2Z" fill="#fff"/></svg>
<div class="a" style="left:32px;top:693px;width:192px;height:27px;background:#f0f0f0"></div>
<svg class="a" style="left:39px;top:700px;" width="13" height="13" viewBox="0 0 13 13"><circle cx="8" cy="5" r="3.8" fill="none" stroke="#222" stroke-width="1.2"/><path d="M5.3 7.7 L1 12" stroke="#222" stroke-width="1.3"/></svg>
<div class="t" style="left:59.0px;top:702px;font-size:10.32px;line-height:10.32px;color:#3a3a3a;transform:scaleX(0.9302);transform-origin:0 0;">Type here to search</div>
<svg class="a" style="left:233.2px;top:697.5px;" width="18" height="18" viewBox="0 0 18 18"><circle cx="9" cy="9" r="8" fill="#db4437"/><path d="M9 9 L2.1 5 A8 8 0 0 0 9 17Z" fill="#0f9d58"/><path d="M9 9 L15.9 5 A8 8 0 0 1 9 17Z" fill="#f4c20d"/><path d="M9 9 L15.9 5 A8 8 0 0 0 2.1 5Z" fill="#db4437"/><circle cx="9" cy="9" r="3.8" fill="#fff"/><circle cx="9" cy="9" r="3" fill="#4285f4"/></svg>
<svg class="a" style="left:265.3px;top:697.5px;" width="18" height="18" viewBox="0 0 18 18"><path d="M1 4 h6 l1.5 1.5 H17 V15 H1Z" fill="#f3c94d"/><rect x="1" y="7" width="16" height="8" fill="#fbd762"/><rect x="5" y="10" width="8" height="5" fill="#4a9ae0"/></svg>
<svg class="a" style="left:298.0px;top:697.5px;" width="18" height="18" viewBox="0 0 18 18"><rect x="5" y="2" width="12" height="14" rx="1" fill="#21a366"/><rect x="5" y="6.5" width="12" height="5" fill="#107c41"/><rect x="1" y="5" width="9" height="9" rx="1" fill="#185c37"/><text x="2.6" y="12.5" font-size="7.5" font-weight="bold" fill="#fff" font-family="Liberation Sans">X</text></svg>
<svg class="a" style="left:330.8px;top:697.5px;" width="18" height="18" viewBox="0 0 18 18"><rect x="5" y="2" width="12" height="14" rx="1" fill="#28a8ea"/><rect x="5" y="9" width="12" height="7" fill="#0078d4"/><rect x="1" y="5" width="9" height="9" rx="1" fill="#0a5ba8"/><text x="2.4" y="12.5" font-size="7.5" font-weight="bold" fill="#fff" font-family="Liberation Sans">O</text></svg>
<svg class="a" style="left:363.6px;top:697.5px;" width="18" height="18" viewBox="0 0 18 18"><rect x="5" y="2" width="12" height="14" rx="1" fill="#41a5ee"/><rect x="5" y="9" width="12" height="7" fill="#185abd"/><rect x="1" y="5" width="9" height="9" rx="1" fill="#1a4fa8"/><text x="1.6" y="12.5" font-size="7" font-weight="bold" fill="#fff" font-family="Liberation Sans">W</text></svg>
<svg class="a" style="left:396.4px;top:697.5px;" width="18" height="18" viewBox="0 0 18 18"><rect x="5" y="2" width="12" height="14" rx="1" fill="#ca64ea"/><rect x="5" y="9" width="12" height="7" fill="#7719aa"/><rect x="1" y="5" width="9" height="9" rx="1" fill="#80397b"/><text x="2.6" y="12.5" font-size="7.5" font-weight="bold" fill="#fff" font-family="Liberation Sans">N</text></svg>
<svg class="a" style="left:428.9px;top:697.5px;" width="18" height="18" viewBox="0 0 18 18"><path d="M3 9 Q5 5 9 6 Q13 5 15 9 Q13 13 9 12 Q5 13 3 9Z" fill="#6a6a5a"/><circle cx="2" cy="7" r="1" fill="#ddd"/><circle cx="16" cy="11" r="1" fill="#ddd"/></svg>
<svg class="a" style="left:461.5px;top:697.5px;" width="18" height="18" viewBox="0 0 18 18"><circle cx="9" cy="8" r="6" fill="#d0402a"/><path d="M7 2 L9 16 M11 2 L9 16" stroke="#fff" stroke-width="1.3"/><circle cx="6" cy="15" r="2" fill="none" stroke="#3a8ad0" stroke-width="1.2"/><circle cx="12" cy="15" r="2" fill="none" stroke="#3a8ad0" stroke-width="1.2"/></svg>
<svg class="a" style="left:494.0px;top:697.5px;" width="18" height="18" viewBox="0 0 18 18"><circle cx="9" cy="9" r="8" fill="#c8cccc"/><path d="M3 10 Q9 5 15 10 L15 13 H3Z" fill="#708080"/><circle cx="6" cy="8" r="1.2" fill="#555"/><circle cx="12" cy="8" r="1.2" fill="#555"/></svg>
<div class="a" style="left:520px;top:693px;width:33px;height:27px;background:#434347"></div>
<svg class="a" style="left:527.0px;top:697.5px;" width="18" height="18" viewBox="0 0 18 18"><circle cx="9" cy="9" r="8" fill="#b8bcc0"/><path d="M2 8 Q9 5 16 11 L15 14 Q9 17 4 13Z" fill="#e0e0d8"/><path d="M7 13 Q10 10 14 12 Q12 16 8 15Z" fill="#b02020"/></svg>
<div class="a" style="left:520px;top:718px;width:33px;height:2px;background:#8fc6f0"></div>
<svg class="a" style="left:559.5px;top:697.5px;" width="18" height="18" viewBox="0 0 18 18"><rect x="1" y="1" width="16" height="16" rx="1" fill="#1a6a8a"/><path d="M13 4 Q5 3 6 7 Q8 9 12 10 Q14 13 5 14" fill="none" stroke="#fff" stroke-width="1.6"/></svg>
<svg class="a" style="left:592.5px;top:697.5px;" width="18" height="18" viewBox="0 0 18 18"><path d="M9 3 A6 6 0 1 1 4 12" fill="none" stroke="#2a4a9a" stroke-width="1.8"/></svg>
<svg class="a" style="left:625.2px;top:697.5px;" width="18" height="18" viewBox="0 0 18 18"><path d="M9 2 L17 16 H1Z" fill="#f0d020"/><path d="M6 12 L9 6 L12 12" fill="none" stroke="#222" stroke-width="1.4"/></svg>
<svg class="a" style="left:658.0px;top:697.5px;" width="18" height="18" viewBox="0 0 18 18"><circle cx="9" cy="9" r="8" fill="#2d8cff"/><text x="3" y="10.5" font-size="4" fill="#fff" font-family="Liberation Sans">zoom</text></svg>
<svg class="a" style="left:690.5px;top:697.5px;" width="18" height="18" viewBox="0 0 18 18"><circle cx="9" cy="9" r="7.5" fill="none" stroke="#ddd" stroke-width="1.4"/><path d="M9 4 A5 5 0 0 1 13.5 11 M13 12 A5 5 0 0 1 4.5 11 M4.5 10 A5 5 0 0 1 9 4" fill="none" stroke="#ddd" stroke-width="1.4"/></svg>
<div class="a" style="left:229px;top:718px;width:26px;height:2px;background:#8fc6f0"></div>
<div class="a" style="left:261px;top:718px;width:27px;height:2px;background:#8fc6f0"></div>
<div class="a" style="left:359px;top:718px;width:27px;height:2px;background:#8fc6f0"></div>
<div class="a" style="left:685px;top:718px;width:30px;height:2px;background:#8fc6f0"></div>
<svg class="a" style="left:1125px;top:702px;" width="11" height="7" viewBox="0 0 11 7"><path d="M1 6 L5.5 1.5 L10 6" fill="none" stroke="#fff" stroke-width="1.1"/></svg>
<svg class="a" style="left:1140px;top:700px;" width="13" height="11" viewBox="0 0 13 11"><rect x="2" y="3" width="10" height="6" fill="none" stroke="#fff" stroke-width="1"/><rect x="3" y="4" width="5" height="4" fill="#fff"/><path d="M0.5 1v9" stroke="#fff"/></svg>
<svg class="a" style="left:1156px;top:700px;" width="13" height="12" viewBox="0 0 13 12"><rect x="3" y="1" width="9" height="7" fill="none" stroke="#fff" stroke-width="1"/><path d="M7 8v3M4 11h7M1 3v8h2" stroke="#fff" stroke-width="1" fill="none"/></svg>
<svg class="a" style="left:1172px;top:700px;" width="12" height="11" viewBox="0 0 12 11"><path d="M1 4h2.5l3-3v9l-3-3H1z" fill="none" stroke="#fff" stroke-width="1"/><path d="M8 4l3 3M11 4l-3 3" stroke="#fff" stroke-width="1"/></svg>
<svg class="a" style="left:1188px;top:700px;" width="11" height="12" viewBox="0 0 11 12"><circle cx="5.5" cy="7" r="4" fill="#d0102a"/><path d="M2 2h2M7 2h2M2 4h2M7 4h2" stroke="#fff" stroke-width="1"/></svg>
<div class="t" style="left:1207.0px;top:697px;font-size:8.81px;line-height:8.81px;color:#fff;transform:scaleX(0.9302);transform-origin:0 0;">11:23 AM</div>
<div class="t" style="left:1207.0px;top:708px;font-size:8.38px;line-height:8.38px;color:#fff;transform:scaleX(0.9302);transform-origin:0 0;">5/29/2023</div>
<svg class="a" style="left:1252px;top:700px;" width="13" height="13" viewBox="0 0 13 13"><path d="M1 1.5h11v8H7.5L6 11.5 4.5 9.5H1z" fill="none" stroke="#fff" stroke-width="1"/></svg>
<div class="a" style="left:1276px;top:693px;width:1px;height:27px;background:#5a5a5a"></div>
</body></html>
